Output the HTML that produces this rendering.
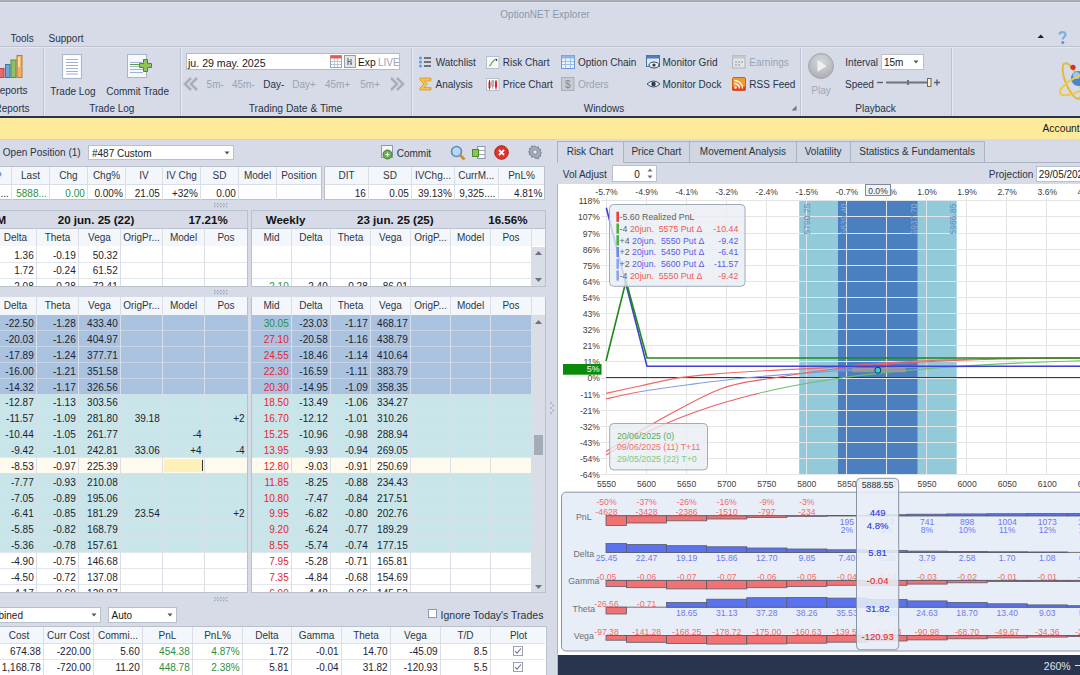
<!DOCTYPE html><html><head><meta charset="utf-8"><style>
html,body{margin:0;padding:0;}
body{width:1080px;height:675px;overflow:hidden;position:relative;background:#d6dbe7;font-family:"Liberation Sans",sans-serif;}
.a{position:absolute;}
.t{position:absolute;white-space:nowrap;}
svg{overflow:visible}
</style></head><body>
<div class="a" style="left:0px;top:0px;width:1080px;height:1px;background:#a9afb3"></div>
<div class="a" style="left:0px;top:1px;width:1080px;height:1px;background:#a3a7b1"></div>
<div class="a" style="left:0px;top:2px;width:1080px;height:1px;background:#dbe1ec"></div>
<div class="t" style="left:395.0px;top:8.54px;font-size:10px;line-height:12px;width:300px;text-align:center;color:#8a98ac;">OptionNET Explorer</div>
<div class="t" style="left:10.5px;top:32.84px;font-size:10px;line-height:12px;color:#283446;">Tools</div>
<div class="t" style="left:48.5px;top:32.84px;font-size:10px;line-height:12px;color:#283446;">Support</div>
<svg class="a" style="left:1037px;top:34px" width="8" height="5"><path d="M0.5 4 L3.8 0.5 L7 4Z" fill="#1a2030"/></svg>
<svg class="a" style="left:1057px;top:30px" width="11" height="15"><path d="M2.5 4.5 C2.5 1.5 8.5 1 8.5 4.5 C8.5 6.5 5.8 7 5.8 9.5" stroke="#78b0e4" stroke-width="2.2" fill="none"/><circle cx="5.8" cy="12.5" r="1.5" fill="#5a94d4"/></svg>
<div class="a" style="left:0px;top:46px;width:1080px;height:1px;background:#bcc3cf"></div>
<div class="a" style="left:0px;top:47px;width:1080px;height:1px;background:#e4e8f0"></div>
<div class="a" style="left:43px;top:48px;width:1px;height:68px;background:#bcc3cf"></div>
<div class="a" style="left:44px;top:48px;width:1px;height:68px;background:#e6eaf1"></div>
<div class="a" style="left:180px;top:48px;width:1px;height:68px;background:#bcc3cf"></div>
<div class="a" style="left:181px;top:48px;width:1px;height:68px;background:#e6eaf1"></div>
<div class="a" style="left:411px;top:48px;width:1px;height:68px;background:#bcc3cf"></div>
<div class="a" style="left:412px;top:48px;width:1px;height:68px;background:#e6eaf1"></div>
<div class="a" style="left:800px;top:48px;width:1px;height:68px;background:#bcc3cf"></div>
<div class="a" style="left:801px;top:48px;width:1px;height:68px;background:#e6eaf1"></div>
<div class="a" style="left:951px;top:48px;width:1px;height:68px;background:#bcc3cf"></div>
<div class="a" style="left:952px;top:48px;width:1px;height:68px;background:#e6eaf1"></div>
<div class="a" style="left:0px;top:116px;width:1080px;height:2px;background:#28344d"></div>
<div class="a" style="left:0px;top:118px;width:1080px;height:21px;background:#fdeb9b"></div>
<div class="t" style="left:1042.5px;top:122.97px;font-size:10.3px;line-height:12px;color:#1a1a1a;">Account:</div>
<div class="a" style="left:0px;top:139px;width:1080px;height:1px;background:#c9cfdb"></div>
<svg class="a" style="left:0;top:54px" width="24" height="25">
<rect x="-1.5" y="14.5" width="5.5" height="9" fill="#e86a6a" stroke="#b94444"/>
<rect x="5.5" y="10.5" width="4.5" height="13" fill="#6aa6e0" stroke="#3f74b0"/>
<rect x="11" y="6" width="5" height="17.5" fill="#8cc266" stroke="#5a8f3a"/>
<rect x="17" y="1.5" width="5" height="22" fill="#f0b060" stroke="#c07830"/>
<rect x="18" y="3" width="2" height="10" fill="#fff3c0" opacity=".7"/>
</svg>
<div class="t" style="left:-7.5px;top:85.23px;font-size:10px;line-height:12px;color:#283446;">Reports</div>
<div class="t" style="left:-5.5px;top:103.23px;font-size:10px;line-height:12px;color:#283446;">Reports</div>
<svg class="a" style="left:61px;top:53px" width="23" height="27">
<rect x="1.5" y="1.5" width="19" height="24" fill="#f6f8fb" stroke="#a9b6c8"/>
<rect x="3" y="3" width="16" height="21" fill="#fff"/>
<g stroke="#9fb3d2" stroke-width="1">
<line x1="5" y1="6.5" x2="17" y2="6.5"/><line x1="5" y1="9.5" x2="17" y2="9.5"/><line x1="5" y1="12.5" x2="17" y2="12.5"/><line x1="5" y1="15.5" x2="17" y2="15.5"/><line x1="5" y1="18.5" x2="17" y2="18.5"/><line x1="5" y1="21" x2="17" y2="21"/></g>
</svg>
<svg class="a" style="left:126px;top:53px" width="28" height="26">
<rect x="1.5" y="1.5" width="19" height="23" fill="#f6f8fb" stroke="#a9b6c8"/>
<g stroke="#9fb3d2" stroke-width="1">
<line x1="4" y1="9.5" x2="16" y2="9.5"/><line x1="4" y1="13.5" x2="17" y2="13.5"/><line x1="4" y1="16.5" x2="17" y2="16.5"/><line x1="4" y1="19.5" x2="17" y2="19.5"/></g>
<line x1="4" y1="11.5" x2="14" y2="11.5" stroke="#5a9a40"/>
<path d="M17.5 6.5h4v4h4v4h-4v4h-4v-4h-4v-4h4z" fill="#8cc456" stroke="#4d8a2a"/>
</svg>
<div class="t" style="left:50.3px;top:85.53px;font-size:10px;line-height:12px;color:#283446;">Trade Log</div>
<div class="t" style="left:106.2px;top:85.53px;font-size:10px;line-height:12px;color:#283446;">Commit Trade</div>
<div class="t" style="left:89.2px;top:103.44px;font-size:10px;line-height:12px;color:#283446;">Trade Log</div>
<div class="a" style="left:186px;top:53px;width:214px;height:17px;background:#fff;border:1px solid #b3bccb;box-sizing:border-box"></div>
<div class="t" style="left:188px;top:56.81px;font-size:10.6px;line-height:13px;color:#1a1a1a;">ju. 29 may. 2025</div>
<svg class="a" style="left:330px;top:55px" width="26" height="13">
<rect x="0.5" y="0.5" width="11" height="12" fill="#fff" stroke="#9aa"/>
<rect x="0.5" y="0.5" width="11" height="3" fill="#e05a50"/>
<g stroke="#b8c4d8"><line x1="1" y1="6.5" x2="11" y2="6.5"/><line x1="1" y1="9.5" x2="11" y2="9.5"/><line x1="4.5" y1="4" x2="4.5" y2="12"/><line x1="7.5" y1="4" x2="7.5" y2="12"/></g>
<rect x="14.5" y="0.5" width="11" height="12" fill="#e4e6ea" stroke="#9a9ea6"/>
<path d="M18 3v7M18 6.5h2M21 4v5M20 9h2" stroke="#555" fill="none"/>
</svg>
<div class="t" style="left:358px;top:57.27px;font-size:10.3px;line-height:12px;color:#1a1a1a;">Exp</div>
<div class="t" style="left:378px;top:57.23px;font-size:10px;line-height:12px;color:#9aa3b3;">LIVE</div>
<svg class="a" style="left:184px;top:77px" width="16" height="14"><path d="M7 1 L1 7 L7 13 M13 1 L7 7 L13 13" stroke="#a9afb8" stroke-width="2.6" fill="none"/></svg>
<svg class="a" style="left:389px;top:77px" width="16" height="14"><path d="M2 1 L8 7 L2 13 M8 1 L14 7 L8 13" stroke="#a9afb8" stroke-width="2.6" fill="none"/></svg>
<div class="t" style="left:206.6px;top:79.44px;font-size:10px;line-height:12px;color:#9aa3b3;">5m-</div>
<div class="t" style="left:232px;top:79.44px;font-size:10px;line-height:12px;color:#9aa3b3;">45m-</div>
<div class="t" style="left:263.3px;top:79.44px;font-size:10px;line-height:12px;color:#2a3548;">Day-</div>
<div class="t" style="left:292.2px;top:79.44px;font-size:10px;line-height:12px;color:#9aa3b3;">Day+</div>
<div class="t" style="left:325px;top:79.44px;font-size:10px;line-height:12px;color:#9aa3b3;">45m+</div>
<div class="t" style="left:360.3px;top:79.44px;font-size:10px;line-height:12px;color:#9aa3b3;">5m+</div>
<div class="t" style="left:248.7px;top:103.27px;font-size:10.25px;line-height:12px;color:#283446;">Trading Date &amp; Time</div>
<div class="t" style="left:435.7px;top:56.73px;font-size:10px;line-height:12px;color:#283446;">Watchlist</div>
<div class="t" style="left:435.5px;top:78.73px;font-size:10px;line-height:12px;color:#283446;">Analysis</div>
<div class="t" style="left:502.8px;top:56.73px;font-size:10px;line-height:12px;color:#283446;">Risk Chart</div>
<div class="t" style="left:502.8px;top:78.73px;font-size:10px;line-height:12px;color:#283446;">Price Chart</div>
<div class="t" style="left:578px;top:56.73px;font-size:10px;line-height:12px;color:#283446;">Option Chain</div>
<div class="t" style="left:578px;top:78.73px;font-size:10px;line-height:12px;color:#9aa3b3;">Orders</div>
<div class="t" style="left:662.5px;top:56.73px;font-size:10px;line-height:12px;color:#283446;">Monitor Grid</div>
<div class="t" style="left:662.5px;top:78.73px;font-size:10px;line-height:12px;color:#283446;">Monitor Dock</div>
<div class="t" style="left:749.3px;top:56.73px;font-size:10px;line-height:12px;color:#9aa3b3;">Earnings</div>
<div class="t" style="left:749.3px;top:78.73px;font-size:10px;line-height:12px;color:#283446;">RSS Feed</div>
<div class="t" style="left:583.7px;top:102.73px;font-size:10px;line-height:12px;color:#283446;">Windows</div>
<svg class="a" style="left:791px;top:105px" width="6" height="6"><path d="M5.5 0.5V5.5H0.5Z" fill="#6a7488"/></svg>
<svg class="a" style="left:418px;top:55px" width="15" height="14">
<g fill="#5b9be0"><circle cx="2.5" cy="3" r="1.5"/><circle cx="2.5" cy="7" r="1.5"/><circle cx="2.5" cy="11" r="1.5"/></g>
<g stroke="#333c4a" stroke-width="1.3"><line x1="6" y1="3" x2="13" y2="3"/><line x1="6" y1="7" x2="13" y2="7"/><line x1="6" y1="11" x2="13" y2="11"/></g></svg>
<svg class="a" style="left:419px;top:77px" width="13" height="14">
<path d="M1 1H12V4H5.5L8.5 7L5 10.5H12V13H1V11L5 7L1 3Z" fill="#f2c24a" stroke="#d99a2a" stroke-width=".8"/></svg>
<svg class="a" style="left:486px;top:56px" width="14" height="14">
<rect x="0.5" y="0.5" width="12.5" height="12" fill="#f8f9fb" stroke="#b6bfcc"/>
<path d="M3 10 C5 10 5 7 6.5 6 C8 5 8 3 10.5 3" stroke="#5aa64a" stroke-width="1.1" fill="none"/><circle cx="10.5" cy="4" r=".9" fill="#334"/></svg>
<svg class="a" style="left:486px;top:78px" width="14" height="14">
<rect x="0.5" y="0.5" width="12.5" height="12" fill="#f8f9fb" stroke="#b6bfcc"/>
<rect x="2.5" y="4" width="2" height="6" fill="#e03030"/><line x1="3.5" y1="2" x2="3.5" y2="11.5" stroke="#c02020"/>
<rect x="5.8" y="3" width="2" height="5" fill="#fff" stroke="#777" stroke-width=".6"/><line x1="6.8" y1="2" x2="6.8" y2="11" stroke="#777" stroke-width=".6"/>
<rect x="9" y="3.5" width="2" height="6" fill="#e03030"/><line x1="10" y1="2" x2="10" y2="11.5" stroke="#c02020"/></svg>
<svg class="a" style="left:561px;top:55px" width="14" height="14">
<rect x="0.5" y="0.5" width="13" height="13" fill="#eaf2fc" stroke="#6b9ad6"/>
<rect x="0.5" y="0.5" width="13" height="3" fill="#8fb6e8"/>
<g stroke="#9cbde6"><line x1="4.5" y1="3" x2="4.5" y2="13"/><line x1="9.5" y1="3" x2="9.5" y2="13"/><line x1="1" y1="6.5" x2="13" y2="6.5"/><line x1="1" y1="9.5" x2="13" y2="9.5"/></g></svg>
<svg class="a" style="left:561px;top:77px" width="14" height="14">
<rect x="0.5" y="0.5" width="12.5" height="13" fill="#c8ccd2" stroke="#a9aeb6"/>
<text x="6.8" y="11" text-anchor="middle" font-family="Liberation Sans" font-size="10" fill="#888">$</text></svg>
<svg class="a" style="left:646px;top:55px" width="15" height="14">
<rect x="0.5" y="0.5" width="13" height="11" fill="#dfe8f4" stroke="#4a6ea0"/>
<rect x="0.5" y="0.5" width="13" height="3" fill="#4a7ec0"/>
<ellipse cx="8" cy="10" rx="5" ry="3" fill="#e8eef6" stroke="#3a4a60"/><circle cx="8" cy="10" r="1.6" fill="#2a3a50"/></svg>
<svg class="a" style="left:646px;top:79px" width="15" height="10">
<path d="M1 5 Q7.5 -1 14 5 Q7.5 11 1 5Z" fill="#e8eef6" stroke="#3a4a60"/><circle cx="7.5" cy="5" r="2.2" fill="#2a3a50"/></svg>
<svg class="a" style="left:732px;top:55px" width="14" height="14">
<rect x="0.5" y="0.5" width="12.5" height="12.5" fill="#e2e4e8" stroke="#b0b4ba"/>
<rect x="0.5" y="0.5" width="12.5" height="3" fill="#c4c8ce"/>
<g fill="#b8bcc2"><rect x="3" y="6" width="2" height="2"/><rect x="6" y="6" width="2" height="2"/><rect x="9" y="6" width="2" height="2"/><rect x="3" y="9" width="2" height="2"/><rect x="6" y="9" width="2" height="2"/></g></svg>
<svg class="a" style="left:732px;top:77px" width="14" height="14">
<rect x="0.5" y="0.5" width="13" height="13" rx="1.5" fill="#f39a2c" stroke="#d0601a"/>
<rect x="0.5" y="9.5" width="13" height="4" fill="#e0402a"/>
<circle cx="3.5" cy="10.5" r="1.3" fill="#fff"/><path d="M2.5 6.5 A5 5 0 0 1 7.5 11.5 M2.5 3.5 A8 8 0 0 1 10.5 11.5" stroke="#fff" stroke-width="1.4" fill="none"/></svg>
<svg class="a" style="left:807px;top:52px" width="28" height="28">
<defs><radialGradient id="pg" cx="50%" cy="35%" r="60%"><stop offset="0" stop-color="#d8dadd"/><stop offset="1" stop-color="#aeb2b8"/></radialGradient></defs>
<circle cx="14" cy="14" r="12.5" fill="url(#pg)" stroke="#a2a6ac"/>
<path d="M10.5 8 L19.5 14 L10.5 20Z" fill="#eef0f2"/></svg>
<div class="t" style="left:671.0px;top:85.23px;font-size:10px;line-height:12px;width:300px;text-align:center;color:#a0a8b4;">Play</div>
<div class="t" style="left:845.3px;top:57.44px;font-size:10px;line-height:12px;color:#283446;">Interval</div>
<div class="a" style="left:881px;top:54px;width:43px;height:16px;background:#fff;border:1px solid #b8c0cc;box-sizing:border-box"></div>
<div class="t" style="left:884px;top:57.44px;font-size:10px;line-height:12px;color:#1a1a1a;">15m</div>
<svg class="a" style="left:913px;top:60px" width="6" height="4"><path d="M0.5 0.5H5.5L3 3.5Z" fill="#555"/></svg>
<div class="t" style="left:845px;top:78.83px;font-size:10px;line-height:12px;color:#283446;">Speed</div>
<svg class="a" style="left:875px;top:78px" width="68" height="10">
<line x1="2" y1="4.5" x2="8" y2="4.5" stroke="#5a6070" stroke-width="1.4"/>
<line x1="11" y1="4.5" x2="53" y2="4.5" stroke="#6d7380" stroke-width="2"/>
<rect x="32" y="2" width="2" height="5" fill="#6d7380"/>
<rect x="52.5" y="0.5" width="3.5" height="8" fill="#fff3c8" stroke="#6d6a60"/>
<path d="M59 4.5H65M62 1.5V7.5" stroke="#5a6070" stroke-width="1.4"/></svg>
<div class="t" style="left:855.3px;top:102.73px;font-size:10px;line-height:12px;color:#283446;">Playback</div>
<svg class="a" style="left:1040px;top:50px" width="40" height="60">
<ellipse cx="20" cy="93" rx="6" ry="2" fill="#b8bcc8" opacity=".6"/>
<ellipse cx="32" cy="31" rx="6.5" ry="19" fill="none" stroke="#e8b830" stroke-width="2" transform="rotate(-22 32 31)"/>
<circle cx="38.5" cy="28.5" r="7.5" fill="#4a86c8"/><circle cx="36.5" cy="25.5" r="3.5" fill="#9cc8f0"/>
<ellipse cx="38" cy="34" rx="20" ry="7" fill="none" stroke="#f0c848" stroke-width="2" transform="rotate(-28 38 34)"/>
<circle cx="33" cy="17.3" r="2.6" fill="#d83020"/></svg>
<div class="t" style="left:2.8px;top:147.34px;font-size:10px;line-height:12px;color:#283446;">Open Position (1)</div>
<div class="a" style="left:88px;top:145px;width:146px;height:15px;background:#fff;border:1px solid #b8c0cc;box-sizing:border-box"></div>
<div class="t" style="left:92px;top:147.64px;font-size:10px;line-height:12px;color:#1a1a1a;">#487 Custom</div>
<svg class="a" style="left:224px;top:151px" width="6" height="4"><path d="M0.5 0.5H5.5L3 3.5Z" fill="#555"/></svg>
<svg class="a" style="left:380px;top:145px" width="15" height="15">
<rect x="1.5" y="0.5" width="11" height="12" fill="#f4f6fa" stroke="#8a9ab0"/>
<circle cx="7.5" cy="9.5" r="4.5" fill="#6ab04c" stroke="#3f7f2a"/><path d="M5.5 9.5h4M7.5 7.5v4" stroke="#fff" stroke-width="1.2"/></svg>
<div class="t" style="left:396.7px;top:147.94px;font-size:10px;line-height:12px;color:#283446;">Commit</div>
<svg class="a" style="left:450px;top:145px" width="16" height="16">
<circle cx="6.5" cy="6.5" r="5" fill="#b8d8f4" stroke="#5a8cc0" stroke-width="1.6"/><path d="M10 10L14.5 14.5" stroke="#c8902a" stroke-width="2.6"/></svg>
<svg class="a" style="left:472px;top:146px" width="14" height="14">
<rect x="5.5" y="0.5" width="7.5" height="12" fill="#fff" stroke="#8a96a6"/><path d="M6 4.5h7M6 8.5h7" stroke="#9aa6b6"/>
<rect x="0.5" y="3.5" width="6" height="7" fill="#8cc456" stroke="#4d8a2a"/></svg>
<svg class="a" style="left:494px;top:145px" width="15" height="15">
<circle cx="7.5" cy="7.5" r="6.8" fill="#e0342c" stroke="#b0201a"/><path d="M5 5L10 10M10 5L5 10" stroke="#fff" stroke-width="1.8"/></svg>
<svg class="a" style="left:528px;top:145px" width="14" height="14">
<path d="M7 0.8l1.3 1.6 2-.6.4 2 2 .7-.6 2 1.5 1.4-1.5 1.3.6 2-2 .7-.4 2-2-.6L7 13.2 5.7 11.6l-2 .6-.4-2-2-.7.6-2L.4 6.9 1.9 5.6l-.6-2 2-.7.4-2 2 .6z" fill="#a4acba" stroke="#727c8c" stroke-width=".9"/><circle cx="7" cy="7" r="2.2" fill="#e8ecf2" stroke="#727c8c" stroke-width=".8"/></svg>
<div class="a" style="left:-1px;top:166px;width:322.5px;height:33.5px;background:#fff;border:1px solid #b9c1cc;box-sizing:border-box"></div>
<div class="a" style="left:0px;top:167px;width:321px;height:17px;background:#f3f6fa"></div>
<div class="a" style="left:0px;top:184px;width:321px;height:1px;background:#dadee6"></div>
<div class="a" style="left:11px;top:167px;width:1px;height:32.5px;background:#dadee6"></div>
<div class="a" style="left:49px;top:167px;width:1px;height:32.5px;background:#dadee6"></div>
<div class="a" style="left:87px;top:167px;width:1px;height:32.5px;background:#dadee6"></div>
<div class="a" style="left:125px;top:167px;width:1px;height:32.5px;background:#dadee6"></div>
<div class="a" style="left:162px;top:167px;width:1px;height:32.5px;background:#dadee6"></div>
<div class="a" style="left:200px;top:167px;width:1px;height:32.5px;background:#dadee6"></div>
<div class="a" style="left:238px;top:167px;width:1px;height:32.5px;background:#dadee6"></div>
<div class="a" style="left:276px;top:167px;width:1px;height:32.5px;background:#dadee6"></div>
<div class="t" style="left:-119.5px;top:170.44px;font-size:10px;line-height:12px;width:300px;text-align:center;color:#2c3646;">Last</div>
<div class="t" style="left:-81.5px;top:170.44px;font-size:10px;line-height:12px;width:300px;text-align:center;color:#2c3646;">Chg</div>
<div class="t" style="left:-43.5px;top:170.44px;font-size:10px;line-height:12px;width:300px;text-align:center;color:#2c3646;">Chg%</div>
<div class="t" style="left:-6.0px;top:170.44px;font-size:10px;line-height:12px;width:300px;text-align:center;color:#2c3646;">IV</div>
<div class="t" style="left:31.5px;top:170.44px;font-size:10px;line-height:12px;width:300px;text-align:center;color:#2c3646;">IV Chg</div>
<div class="t" style="left:69.5px;top:170.44px;font-size:10px;line-height:12px;width:300px;text-align:center;color:#2c3646;">SD</div>
<div class="t" style="left:107.5px;top:170.44px;font-size:10px;line-height:12px;width:300px;text-align:center;color:#2c3646;">Model</div>
<div class="t" style="left:149.0px;top:170.44px;font-size:10px;line-height:12px;width:300px;text-align:center;color:#2c3646;">Position</div>
<div class="t" style="left:-4px;top:170.74px;font-size:10px;line-height:12px;"><span style="color:#3a7ad0">?</span></div>
<div class="t" style="left:-191.2px;top:187.84px;font-size:10px;line-height:12px;width:200px;text-align:right;color:#1e2230;">...</div>
<div class="t" style="left:-153.2px;top:187.84px;font-size:10px;line-height:12px;width:200px;text-align:right;color:#2a9040;">5888...</div>
<div class="t" style="left:-115.2px;top:187.84px;font-size:10px;line-height:12px;width:200px;text-align:right;color:#2a9040;">0.00</div>
<div class="t" style="left:-77.2px;top:187.84px;font-size:10px;line-height:12px;width:200px;text-align:right;color:#1e2230;">0.00%</div>
<div class="t" style="left:-40.19999999999999px;top:187.84px;font-size:10px;line-height:12px;width:200px;text-align:right;color:#1e2230;">21.05</div>
<div class="t" style="left:-2.1999999999999886px;top:187.84px;font-size:10px;line-height:12px;width:200px;text-align:right;color:#1e2230;">+32%</div>
<div class="t" style="left:35.80000000000001px;top:187.84px;font-size:10px;line-height:12px;width:200px;text-align:right;color:#1e2230;">0.00</div>
<div class="a" style="left:324px;top:166px;width:221px;height:33.5px;background:#fff;border:1px solid #b9c1cc;box-sizing:border-box"></div>
<div class="a" style="left:325px;top:167px;width:219px;height:17px;background:#f3f6fa"></div>
<div class="a" style="left:325px;top:184px;width:219px;height:1px;background:#dadee6"></div>
<div class="a" style="left:368px;top:167px;width:1px;height:32.5px;background:#dadee6"></div>
<div class="a" style="left:411px;top:167px;width:1px;height:32.5px;background:#dadee6"></div>
<div class="a" style="left:454px;top:167px;width:1px;height:32.5px;background:#dadee6"></div>
<div class="a" style="left:497.5px;top:167px;width:1px;height:32.5px;background:#dadee6"></div>
<div class="t" style="left:196.5px;top:170.44px;font-size:10px;line-height:12px;width:300px;text-align:center;color:#2c3646;">DIT</div>
<div class="t" style="left:240.0px;top:170.44px;font-size:10px;line-height:12px;width:300px;text-align:center;color:#2c3646;">SD</div>
<div class="t" style="left:283.0px;top:170.44px;font-size:10px;line-height:12px;width:300px;text-align:center;color:#2c3646;">IVChg...</div>
<div class="t" style="left:326.25px;top:170.44px;font-size:10px;line-height:12px;width:300px;text-align:center;color:#2c3646;">CurrM...</div>
<div class="t" style="left:371.5px;top:170.44px;font-size:10px;line-height:12px;width:300px;text-align:center;color:#2c3646;">PnL%</div>
<div class="t" style="left:165.8px;top:187.84px;font-size:10px;line-height:12px;width:200px;text-align:right;color:#1e2230;">16</div>
<div class="t" style="left:208.8px;top:187.84px;font-size:10px;line-height:12px;width:200px;text-align:right;color:#1e2230;">0.05</div>
<div class="t" style="left:251.8px;top:187.84px;font-size:10px;line-height:12px;width:200px;text-align:right;color:#1e2230;">39.13%</div>
<div class="t" style="left:295.3px;top:187.84px;font-size:10px;line-height:12px;width:200px;text-align:right;color:#1e2230;">9,325....</div>
<div class="t" style="left:342.29999999999995px;top:187.84px;font-size:10px;line-height:12px;width:200px;text-align:right;color:#1e2230;">4.81%</div>
<svg class="a" style="left:214px;top:203.2px" width="14" height="5"><g fill="#8a98ae" opacity=".8"><rect x="0" y="0" width="1.3" height="1.3"/><rect x="0" y="3" width="1.3" height="1.3"/><rect x="3" y="0" width="1.3" height="1.3"/><rect x="3" y="3" width="1.3" height="1.3"/><rect x="6" y="0" width="1.3" height="1.3"/><rect x="6" y="3" width="1.3" height="1.3"/><rect x="9" y="0" width="1.3" height="1.3"/><rect x="9" y="3" width="1.3" height="1.3"/><rect x="12" y="0" width="1.3" height="1.3"/><rect x="12" y="3" width="1.3" height="1.3"/><rect x="1.5" y="1.5" width="1.1" height="1.1"/><rect x="4.5" y="1.5" width="1.1" height="1.1"/><rect x="7.5" y="1.5" width="1.1" height="1.1"/><rect x="10.5" y="1.5" width="1.1" height="1.1"/></g></svg>
<div class="a" style="left:-2px;top:210px;width:250px;height:76.5px;background:#fff;border:1px solid #b9c1cc;box-sizing:border-box"></div>
<div class="a" style="left:-1px;top:211px;width:248px;height:17.5px;background:#d6dbe7"></div>
<div class="a" style="left:-1px;top:227.5px;width:248px;height:1px;background:#bcc3cf"></div>
<div class="a" style="left:-1px;top:228.5px;width:248px;height:17.80000000000001px;background:#f3f6fa"></div>
<div class="a" style="left:-1px;top:262px;width:248px;height:1px;background:#e3e6ec"></div>
<div class="a" style="left:-1px;top:278px;width:248px;height:1px;background:#e3e6ec"></div>
<div class="a" style="left:36px;top:228.5px;width:1px;height:57.0px;background:#dadee6"></div>
<div class="a" style="left:78px;top:228.5px;width:1px;height:57.0px;background:#dadee6"></div>
<div class="a" style="left:120px;top:228.5px;width:1px;height:57.0px;background:#dadee6"></div>
<div class="a" style="left:162px;top:228.5px;width:1px;height:57.0px;background:#dadee6"></div>
<div class="a" style="left:204px;top:228.5px;width:1px;height:57.0px;background:#dadee6"></div>
<div class="t" style="left:-134.5px;top:231.94px;font-size:10px;line-height:12px;width:300px;text-align:center;color:#2c3646;">Delta</div>
<div class="t" style="left:-92.5px;top:231.94px;font-size:10px;line-height:12px;width:300px;text-align:center;color:#2c3646;">Theta</div>
<div class="t" style="left:-50.5px;top:231.94px;font-size:10px;line-height:12px;width:300px;text-align:center;color:#2c3646;">Vega</div>
<div class="t" style="left:-8.5px;top:231.94px;font-size:10px;line-height:12px;width:300px;text-align:center;color:#2c3646;">OrigPr...</div>
<div class="t" style="left:33.5px;top:231.94px;font-size:10px;line-height:12px;width:300px;text-align:center;color:#2c3646;">Model</div>
<div class="t" style="left:76.0px;top:231.94px;font-size:10px;line-height:12px;width:300px;text-align:center;color:#2c3646;">Pos</div>
<div class="a" style="left:0px;top:246px;width:247px;height:39.5px;overflow:hidden">
<div class="t" style="left:-166.3px;top:3.57px;font-size:10px;line-height:12px;width:200px;text-align:right;color:#1e2230;">1.36</div>
<div class="t" style="left:-124.3px;top:3.57px;font-size:10px;line-height:12px;width:200px;text-align:right;color:#1e2230;">-0.19</div>
<div class="t" style="left:-82.3px;top:3.57px;font-size:10px;line-height:12px;width:200px;text-align:right;color:#1e2230;">50.32</div>
<div class="t" style="left:-166.3px;top:19.43px;font-size:10px;line-height:12px;width:200px;text-align:right;color:#1e2230;">1.72</div>
<div class="t" style="left:-124.3px;top:19.43px;font-size:10px;line-height:12px;width:200px;text-align:right;color:#1e2230;">-0.24</div>
<div class="t" style="left:-82.3px;top:19.43px;font-size:10px;line-height:12px;width:200px;text-align:right;color:#1e2230;">61.52</div>
<div class="t" style="left:-166.3px;top:35.29px;font-size:10px;line-height:12px;width:200px;text-align:right;color:#1e2230;">2.08</div>
<div class="t" style="left:-124.3px;top:35.29px;font-size:10px;line-height:12px;width:200px;text-align:right;color:#1e2230;">-0.28</div>
<div class="t" style="left:-82.3px;top:35.29px;font-size:10px;line-height:12px;width:200px;text-align:right;color:#1e2230;">72.41</div>
</div>
<div class="t" style="left:-3.5px;top:213.03px;font-size:11.6px;line-height:14px;color:#111;font-weight:bold;">M</div>
<div class="t" style="left:57.7px;top:213.03px;font-size:11.6px;line-height:14px;color:#111;font-weight:bold;">20 jun. 25 (22)</div>
<div class="t" style="left:188.4px;top:213.03px;font-size:11.6px;line-height:14px;color:#111;font-weight:bold;">17.21%</div>
<div class="a" style="left:251px;top:210px;width:295px;height:76.5px;background:#fff;border:1px solid #b9c1cc;box-sizing:border-box"></div>
<div class="a" style="left:252px;top:211px;width:293px;height:17.5px;background:#d6dbe7"></div>
<div class="a" style="left:252px;top:227.5px;width:293px;height:1px;background:#bcc3cf"></div>
<div class="a" style="left:252px;top:228.5px;width:293px;height:17.80000000000001px;background:#f3f6fa"></div>
<div class="a" style="left:252px;top:262px;width:279px;height:1px;background:#e3e6ec"></div>
<div class="a" style="left:252px;top:278px;width:279px;height:1px;background:#e3e6ec"></div>
<div class="a" style="left:291px;top:228.5px;width:1px;height:57.0px;background:#dadee6"></div>
<div class="a" style="left:330px;top:228.5px;width:1px;height:57.0px;background:#dadee6"></div>
<div class="a" style="left:370px;top:228.5px;width:1px;height:57.0px;background:#dadee6"></div>
<div class="a" style="left:410px;top:228.5px;width:1px;height:57.0px;background:#dadee6"></div>
<div class="a" style="left:450px;top:228.5px;width:1px;height:57.0px;background:#dadee6"></div>
<div class="a" style="left:490px;top:228.5px;width:1px;height:57.0px;background:#dadee6"></div>
<div class="a" style="left:531px;top:228.5px;width:1px;height:57.0px;background:#dadee6"></div>
<div class="t" style="left:121.5px;top:231.94px;font-size:10px;line-height:12px;width:300px;text-align:center;color:#2c3646;">Mid</div>
<div class="t" style="left:161.0px;top:231.94px;font-size:10px;line-height:12px;width:300px;text-align:center;color:#2c3646;">Delta</div>
<div class="t" style="left:200.5px;top:231.94px;font-size:10px;line-height:12px;width:300px;text-align:center;color:#2c3646;">Theta</div>
<div class="t" style="left:240.5px;top:231.94px;font-size:10px;line-height:12px;width:300px;text-align:center;color:#2c3646;">Vega</div>
<div class="t" style="left:280.5px;top:231.94px;font-size:10px;line-height:12px;width:300px;text-align:center;color:#2c3646;">OrigP...</div>
<div class="t" style="left:320.5px;top:231.94px;font-size:10px;line-height:12px;width:300px;text-align:center;color:#2c3646;">Model</div>
<div class="t" style="left:361.0px;top:231.94px;font-size:10px;line-height:12px;width:300px;text-align:center;color:#2c3646;">Pos</div>
<div class="a" style="left:252px;top:246px;width:279px;height:39.5px;overflow:hidden">
<div class="t" style="left:-163.3px;top:35.29px;font-size:10px;line-height:12px;width:200px;text-align:right;color:#2a9040;">2.10</div>
<div class="t" style="left:-124.30000000000001px;top:35.29px;font-size:10px;line-height:12px;width:200px;text-align:right;color:#1e2230;">-2.40</div>
<div class="t" style="left:-84.30000000000001px;top:35.29px;font-size:10px;line-height:12px;width:200px;text-align:right;color:#1e2230;">-0.28</div>
<div class="t" style="left:-44.30000000000001px;top:35.29px;font-size:10px;line-height:12px;width:200px;text-align:right;color:#1e2230;">86.01</div>
</div>
<div class="t" style="left:265.7px;top:213.03px;font-size:11.6px;line-height:14px;color:#111;font-weight:bold;">Weekly</div>
<div class="t" style="left:357px;top:213.03px;font-size:11.6px;line-height:14px;color:#111;font-weight:bold;">23 jun. 25 (25)</div>
<div class="t" style="left:488.2px;top:213.03px;font-size:11.6px;line-height:14px;color:#111;font-weight:bold;">16.56%</div>
<div class="a" style="left:531px;top:246.5px;width:14px;height:39px;background:#d8dde6"></div>
<svg class="a" style="left:535px;top:251px" width="7" height="4"><path d="M0 4H7L3.5 0Z" fill="#6a7282"/></svg>
<svg class="a" style="left:535px;top:278px" width="7" height="4"><path d="M0 0H7L3.5 4Z" fill="#6a7282"/></svg>
<svg class="a" style="left:214px;top:289.9px" width="14" height="5"><g fill="#8a98ae" opacity=".8"><rect x="0" y="0" width="1.3" height="1.3"/><rect x="0" y="3" width="1.3" height="1.3"/><rect x="3" y="0" width="1.3" height="1.3"/><rect x="3" y="3" width="1.3" height="1.3"/><rect x="6" y="0" width="1.3" height="1.3"/><rect x="6" y="3" width="1.3" height="1.3"/><rect x="9" y="0" width="1.3" height="1.3"/><rect x="9" y="3" width="1.3" height="1.3"/><rect x="12" y="0" width="1.3" height="1.3"/><rect x="12" y="3" width="1.3" height="1.3"/><rect x="1.5" y="1.5" width="1.1" height="1.1"/><rect x="4.5" y="1.5" width="1.1" height="1.1"/><rect x="7.5" y="1.5" width="1.1" height="1.1"/><rect x="10.5" y="1.5" width="1.1" height="1.1"/></g></svg>
<div class="a" style="left:-2px;top:297px;width:250px;height:296px;background:#fff;border:1px solid #b9c1cc;box-sizing:border-box"></div>
<div class="a" style="left:-1px;top:297px;width:248px;height:17.80000000000001px;background:#f3f6fa"></div>
<div class="a" style="left:-1px;top:314.8px;width:248px;height:15.86px;background:#a9c2e0"></div>
<div class="a" style="left:-1px;top:330.66px;width:248px;height:15.86px;background:#a9c2e0"></div>
<div class="a" style="left:-1px;top:346.52px;width:248px;height:15.86px;background:#a9c2e0"></div>
<div class="a" style="left:-1px;top:362.38px;width:248px;height:15.86px;background:#a9c2e0"></div>
<div class="a" style="left:-1px;top:378.24px;width:248px;height:15.86px;background:#a9c2e0"></div>
<div class="a" style="left:-1px;top:394.1px;width:248px;height:15.86px;background:#c8e5ea"></div>
<div class="a" style="left:-1px;top:409.96000000000004px;width:248px;height:15.86px;background:#c8e5ea"></div>
<div class="a" style="left:-1px;top:425.82px;width:248px;height:15.86px;background:#c8e5ea"></div>
<div class="a" style="left:-1px;top:441.68px;width:248px;height:15.86px;background:#c8e5ea"></div>
<div class="a" style="left:-1px;top:457.54px;width:248px;height:15.86px;background:#fffaee"></div>
<div class="a" style="left:-1px;top:473.4px;width:248px;height:15.86px;background:#c8e5ea"></div>
<div class="a" style="left:-1px;top:489.26px;width:248px;height:15.86px;background:#c8e5ea"></div>
<div class="a" style="left:-1px;top:505.12px;width:248px;height:15.86px;background:#c8e5ea"></div>
<div class="a" style="left:-1px;top:520.98px;width:248px;height:15.86px;background:#c8e5ea"></div>
<div class="a" style="left:-1px;top:536.84px;width:248px;height:15.86px;background:#c8e5ea"></div>
<div class="a" style="left:-1px;top:330px;width:248px;height:1px;background:#c8d4e6"></div>
<div class="a" style="left:-1px;top:346px;width:248px;height:1px;background:#c8d4e6"></div>
<div class="a" style="left:-1px;top:362px;width:248px;height:1px;background:#c8d4e6"></div>
<div class="a" style="left:-1px;top:378px;width:248px;height:1px;background:#c8d4e6"></div>
<div class="a" style="left:-1px;top:394px;width:248px;height:1px;background:#d4e2e8"></div>
<div class="a" style="left:-1px;top:409px;width:248px;height:1px;background:#d4e2e8"></div>
<div class="a" style="left:-1px;top:425px;width:248px;height:1px;background:#d4e2e8"></div>
<div class="a" style="left:-1px;top:441px;width:248px;height:1px;background:#d4e2e8"></div>
<div class="a" style="left:-1px;top:457px;width:248px;height:1px;background:#e3e6ec"></div>
<div class="a" style="left:-1px;top:473px;width:248px;height:1px;background:#d4e2e8"></div>
<div class="a" style="left:-1px;top:489px;width:248px;height:1px;background:#d4e2e8"></div>
<div class="a" style="left:-1px;top:505px;width:248px;height:1px;background:#d4e2e8"></div>
<div class="a" style="left:-1px;top:520px;width:248px;height:1px;background:#d4e2e8"></div>
<div class="a" style="left:-1px;top:536px;width:248px;height:1px;background:#d4e2e8"></div>
<div class="a" style="left:-1px;top:552px;width:248px;height:1px;background:#e3e6ec"></div>
<div class="a" style="left:-1px;top:568px;width:248px;height:1px;background:#e3e6ec"></div>
<div class="a" style="left:-1px;top:584px;width:248px;height:1px;background:#e3e6ec"></div>
<div class="a" style="left:36px;top:297px;width:1px;height:295px;background:#dadee6"></div>
<div class="a" style="left:78px;top:297px;width:1px;height:295px;background:#dadee6"></div>
<div class="a" style="left:120px;top:297px;width:1px;height:295px;background:#dadee6"></div>
<div class="a" style="left:162px;top:297px;width:1px;height:295px;background:#dadee6"></div>
<div class="a" style="left:204px;top:297px;width:1px;height:295px;background:#dadee6"></div>
<div class="t" style="left:-134.5px;top:300.44px;font-size:10px;line-height:12px;width:300px;text-align:center;color:#2c3646;">Delta</div>
<div class="t" style="left:-92.5px;top:300.44px;font-size:10px;line-height:12px;width:300px;text-align:center;color:#2c3646;">Theta</div>
<div class="t" style="left:-50.5px;top:300.44px;font-size:10px;line-height:12px;width:300px;text-align:center;color:#2c3646;">Vega</div>
<div class="t" style="left:-8.5px;top:300.44px;font-size:10px;line-height:12px;width:300px;text-align:center;color:#2c3646;">OrigPr...</div>
<div class="t" style="left:33.5px;top:300.44px;font-size:10px;line-height:12px;width:300px;text-align:center;color:#2c3646;">Model</div>
<div class="t" style="left:76.0px;top:300.44px;font-size:10px;line-height:12px;width:300px;text-align:center;color:#2c3646;">Pos</div>
<div class="a" style="left:0px;top:315px;width:247px;height:277px;overflow:hidden">
<div class="t" style="left:-166.3px;top:3.07px;font-size:10px;line-height:12px;width:200px;text-align:right;color:#1e2230;">-22.50</div>
<div class="t" style="left:-124.3px;top:3.07px;font-size:10px;line-height:12px;width:200px;text-align:right;color:#1e2230;">-1.28</div>
<div class="t" style="left:-82.3px;top:3.07px;font-size:10px;line-height:12px;width:200px;text-align:right;color:#1e2230;">433.40</div>
<div class="t" style="left:-166.3px;top:18.93px;font-size:10px;line-height:12px;width:200px;text-align:right;color:#1e2230;">-20.03</div>
<div class="t" style="left:-124.3px;top:18.93px;font-size:10px;line-height:12px;width:200px;text-align:right;color:#1e2230;">-1.26</div>
<div class="t" style="left:-82.3px;top:18.93px;font-size:10px;line-height:12px;width:200px;text-align:right;color:#1e2230;">404.97</div>
<div class="t" style="left:-166.3px;top:34.79px;font-size:10px;line-height:12px;width:200px;text-align:right;color:#1e2230;">-17.89</div>
<div class="t" style="left:-124.3px;top:34.79px;font-size:10px;line-height:12px;width:200px;text-align:right;color:#1e2230;">-1.24</div>
<div class="t" style="left:-82.3px;top:34.79px;font-size:10px;line-height:12px;width:200px;text-align:right;color:#1e2230;">377.71</div>
<div class="t" style="left:-166.3px;top:50.65px;font-size:10px;line-height:12px;width:200px;text-align:right;color:#1e2230;">-16.00</div>
<div class="t" style="left:-124.3px;top:50.65px;font-size:10px;line-height:12px;width:200px;text-align:right;color:#1e2230;">-1.21</div>
<div class="t" style="left:-82.3px;top:50.65px;font-size:10px;line-height:12px;width:200px;text-align:right;color:#1e2230;">351.58</div>
<div class="t" style="left:-166.3px;top:66.51px;font-size:10px;line-height:12px;width:200px;text-align:right;color:#1e2230;">-14.32</div>
<div class="t" style="left:-124.3px;top:66.51px;font-size:10px;line-height:12px;width:200px;text-align:right;color:#1e2230;">-1.17</div>
<div class="t" style="left:-82.3px;top:66.51px;font-size:10px;line-height:12px;width:200px;text-align:right;color:#1e2230;">326.56</div>
<div class="t" style="left:-166.3px;top:82.37px;font-size:10px;line-height:12px;width:200px;text-align:right;color:#1e2230;">-12.87</div>
<div class="t" style="left:-124.3px;top:82.37px;font-size:10px;line-height:12px;width:200px;text-align:right;color:#1e2230;">-1.13</div>
<div class="t" style="left:-82.3px;top:82.37px;font-size:10px;line-height:12px;width:200px;text-align:right;color:#1e2230;">303.56</div>
<div class="t" style="left:-166.3px;top:98.23px;font-size:10px;line-height:12px;width:200px;text-align:right;color:#1e2230;">-11.57</div>
<div class="t" style="left:-124.3px;top:98.23px;font-size:10px;line-height:12px;width:200px;text-align:right;color:#1e2230;">-1.09</div>
<div class="t" style="left:-82.3px;top:98.23px;font-size:10px;line-height:12px;width:200px;text-align:right;color:#1e2230;">281.80</div>
<div class="t" style="left:-40.30000000000001px;top:98.23px;font-size:10px;line-height:12px;width:200px;text-align:right;color:#1e2230;">39.18</div>
<div class="t" style="left:44.69999999999999px;top:98.23px;font-size:10px;line-height:12px;width:200px;text-align:right;color:#1e2230;">+2</div>
<div class="t" style="left:-166.3px;top:114.09px;font-size:10px;line-height:12px;width:200px;text-align:right;color:#1e2230;">-10.44</div>
<div class="t" style="left:-124.3px;top:114.09px;font-size:10px;line-height:12px;width:200px;text-align:right;color:#1e2230;">-1.05</div>
<div class="t" style="left:-82.3px;top:114.09px;font-size:10px;line-height:12px;width:200px;text-align:right;color:#1e2230;">261.77</div>
<div class="t" style="left:1.6999999999999886px;top:114.09px;font-size:10px;line-height:12px;width:200px;text-align:right;color:#1e2230;">-4</div>
<div class="t" style="left:-166.3px;top:129.95px;font-size:10px;line-height:12px;width:200px;text-align:right;color:#1e2230;">-9.42</div>
<div class="t" style="left:-124.3px;top:129.95px;font-size:10px;line-height:12px;width:200px;text-align:right;color:#1e2230;">-1.01</div>
<div class="t" style="left:-82.3px;top:129.95px;font-size:10px;line-height:12px;width:200px;text-align:right;color:#1e2230;">242.81</div>
<div class="t" style="left:-40.30000000000001px;top:129.95px;font-size:10px;line-height:12px;width:200px;text-align:right;color:#1e2230;">33.06</div>
<div class="t" style="left:1.6999999999999886px;top:129.95px;font-size:10px;line-height:12px;width:200px;text-align:right;color:#1e2230;">+4</div>
<div class="t" style="left:44.69999999999999px;top:129.95px;font-size:10px;line-height:12px;width:200px;text-align:right;color:#1e2230;">-4</div>
<div class="t" style="left:-166.3px;top:145.81px;font-size:10px;line-height:12px;width:200px;text-align:right;color:#1e2230;">-8.53</div>
<div class="t" style="left:-124.3px;top:145.81px;font-size:10px;line-height:12px;width:200px;text-align:right;color:#1e2230;">-0.97</div>
<div class="t" style="left:-82.3px;top:145.81px;font-size:10px;line-height:12px;width:200px;text-align:right;color:#1e2230;">225.39</div>
<div class="t" style="left:-166.3px;top:161.67px;font-size:10px;line-height:12px;width:200px;text-align:right;color:#1e2230;">-7.77</div>
<div class="t" style="left:-124.3px;top:161.67px;font-size:10px;line-height:12px;width:200px;text-align:right;color:#1e2230;">-0.93</div>
<div class="t" style="left:-82.3px;top:161.67px;font-size:10px;line-height:12px;width:200px;text-align:right;color:#1e2230;">210.08</div>
<div class="t" style="left:-166.3px;top:177.53px;font-size:10px;line-height:12px;width:200px;text-align:right;color:#1e2230;">-7.05</div>
<div class="t" style="left:-124.3px;top:177.53px;font-size:10px;line-height:12px;width:200px;text-align:right;color:#1e2230;">-0.89</div>
<div class="t" style="left:-82.3px;top:177.53px;font-size:10px;line-height:12px;width:200px;text-align:right;color:#1e2230;">195.06</div>
<div class="t" style="left:-166.3px;top:193.38px;font-size:10px;line-height:12px;width:200px;text-align:right;color:#1e2230;">-6.41</div>
<div class="t" style="left:-124.3px;top:193.38px;font-size:10px;line-height:12px;width:200px;text-align:right;color:#1e2230;">-0.85</div>
<div class="t" style="left:-82.3px;top:193.38px;font-size:10px;line-height:12px;width:200px;text-align:right;color:#1e2230;">181.29</div>
<div class="t" style="left:-40.30000000000001px;top:193.38px;font-size:10px;line-height:12px;width:200px;text-align:right;color:#1e2230;">23.54</div>
<div class="t" style="left:44.69999999999999px;top:193.38px;font-size:10px;line-height:12px;width:200px;text-align:right;color:#1e2230;">+2</div>
<div class="t" style="left:-166.3px;top:209.25px;font-size:10px;line-height:12px;width:200px;text-align:right;color:#1e2230;">-5.85</div>
<div class="t" style="left:-124.3px;top:209.25px;font-size:10px;line-height:12px;width:200px;text-align:right;color:#1e2230;">-0.82</div>
<div class="t" style="left:-82.3px;top:209.25px;font-size:10px;line-height:12px;width:200px;text-align:right;color:#1e2230;">168.79</div>
<div class="t" style="left:-166.3px;top:225.11px;font-size:10px;line-height:12px;width:200px;text-align:right;color:#1e2230;">-5.36</div>
<div class="t" style="left:-124.3px;top:225.11px;font-size:10px;line-height:12px;width:200px;text-align:right;color:#1e2230;">-0.78</div>
<div class="t" style="left:-82.3px;top:225.11px;font-size:10px;line-height:12px;width:200px;text-align:right;color:#1e2230;">157.61</div>
<div class="t" style="left:-166.3px;top:240.97px;font-size:10px;line-height:12px;width:200px;text-align:right;color:#1e2230;">-4.90</div>
<div class="t" style="left:-124.3px;top:240.97px;font-size:10px;line-height:12px;width:200px;text-align:right;color:#1e2230;">-0.75</div>
<div class="t" style="left:-82.3px;top:240.97px;font-size:10px;line-height:12px;width:200px;text-align:right;color:#1e2230;">146.68</div>
<div class="t" style="left:-166.3px;top:256.82px;font-size:10px;line-height:12px;width:200px;text-align:right;color:#1e2230;">-4.50</div>
<div class="t" style="left:-124.3px;top:256.82px;font-size:10px;line-height:12px;width:200px;text-align:right;color:#1e2230;">-0.72</div>
<div class="t" style="left:-82.3px;top:256.82px;font-size:10px;line-height:12px;width:200px;text-align:right;color:#1e2230;">137.08</div>
<div class="t" style="left:-166.3px;top:272.69px;font-size:10px;line-height:12px;width:200px;text-align:right;color:#1e2230;">-4.17</div>
<div class="t" style="left:-124.3px;top:272.69px;font-size:10px;line-height:12px;width:200px;text-align:right;color:#1e2230;">-0.69</div>
<div class="t" style="left:-82.3px;top:272.69px;font-size:10px;line-height:12px;width:200px;text-align:right;color:#1e2230;">128.87</div>
</div>
<div class="a" style="left:164px;top:459.3px;width:39px;height:13px;background:#fdf0b8"></div>
<div class="a" style="left:202px;top:460px;width:1px;height:11px;background:#333"></div>
<div class="a" style="left:251px;top:297px;width:295px;height:296px;background:#fff;border:1px solid #b9c1cc;box-sizing:border-box"></div>
<div class="a" style="left:252px;top:297px;width:293px;height:17.80000000000001px;background:#f3f6fa"></div>
<div class="a" style="left:252px;top:314.8px;width:279px;height:15.86px;background:#a9c2e0"></div>
<div class="a" style="left:252px;top:330.66px;width:279px;height:15.86px;background:#a9c2e0"></div>
<div class="a" style="left:252px;top:346.52px;width:279px;height:15.86px;background:#a9c2e0"></div>
<div class="a" style="left:252px;top:362.38px;width:279px;height:15.86px;background:#a9c2e0"></div>
<div class="a" style="left:252px;top:378.24px;width:279px;height:15.86px;background:#a9c2e0"></div>
<div class="a" style="left:252px;top:394.1px;width:279px;height:15.86px;background:#c8e5ea"></div>
<div class="a" style="left:252px;top:409.96000000000004px;width:279px;height:15.86px;background:#c8e5ea"></div>
<div class="a" style="left:252px;top:425.82px;width:279px;height:15.86px;background:#c8e5ea"></div>
<div class="a" style="left:252px;top:441.68px;width:279px;height:15.86px;background:#c8e5ea"></div>
<div class="a" style="left:252px;top:457.54px;width:279px;height:15.86px;background:#fffaee"></div>
<div class="a" style="left:252px;top:473.4px;width:279px;height:15.86px;background:#c8e5ea"></div>
<div class="a" style="left:252px;top:489.26px;width:279px;height:15.86px;background:#c8e5ea"></div>
<div class="a" style="left:252px;top:505.12px;width:279px;height:15.86px;background:#c8e5ea"></div>
<div class="a" style="left:252px;top:520.98px;width:279px;height:15.86px;background:#c8e5ea"></div>
<div class="a" style="left:252px;top:536.84px;width:279px;height:15.86px;background:#c8e5ea"></div>
<div class="a" style="left:252px;top:330px;width:279px;height:1px;background:#c8d4e6"></div>
<div class="a" style="left:252px;top:346px;width:279px;height:1px;background:#c8d4e6"></div>
<div class="a" style="left:252px;top:362px;width:279px;height:1px;background:#c8d4e6"></div>
<div class="a" style="left:252px;top:378px;width:279px;height:1px;background:#c8d4e6"></div>
<div class="a" style="left:252px;top:394px;width:279px;height:1px;background:#d4e2e8"></div>
<div class="a" style="left:252px;top:409px;width:279px;height:1px;background:#d4e2e8"></div>
<div class="a" style="left:252px;top:425px;width:279px;height:1px;background:#d4e2e8"></div>
<div class="a" style="left:252px;top:441px;width:279px;height:1px;background:#d4e2e8"></div>
<div class="a" style="left:252px;top:457px;width:279px;height:1px;background:#e3e6ec"></div>
<div class="a" style="left:252px;top:473px;width:279px;height:1px;background:#d4e2e8"></div>
<div class="a" style="left:252px;top:489px;width:279px;height:1px;background:#d4e2e8"></div>
<div class="a" style="left:252px;top:505px;width:279px;height:1px;background:#d4e2e8"></div>
<div class="a" style="left:252px;top:520px;width:279px;height:1px;background:#d4e2e8"></div>
<div class="a" style="left:252px;top:536px;width:279px;height:1px;background:#d4e2e8"></div>
<div class="a" style="left:252px;top:552px;width:279px;height:1px;background:#e3e6ec"></div>
<div class="a" style="left:252px;top:568px;width:279px;height:1px;background:#e3e6ec"></div>
<div class="a" style="left:252px;top:584px;width:279px;height:1px;background:#e3e6ec"></div>
<div class="a" style="left:291px;top:297px;width:1px;height:295px;background:#dadee6"></div>
<div class="a" style="left:330px;top:297px;width:1px;height:295px;background:#dadee6"></div>
<div class="a" style="left:370px;top:297px;width:1px;height:295px;background:#dadee6"></div>
<div class="a" style="left:410px;top:297px;width:1px;height:295px;background:#dadee6"></div>
<div class="a" style="left:450px;top:297px;width:1px;height:295px;background:#dadee6"></div>
<div class="a" style="left:490px;top:297px;width:1px;height:295px;background:#dadee6"></div>
<div class="a" style="left:531px;top:297px;width:1px;height:295px;background:#dadee6"></div>
<div class="t" style="left:121.5px;top:300.44px;font-size:10px;line-height:12px;width:300px;text-align:center;color:#2c3646;">Mid</div>
<div class="t" style="left:161.0px;top:300.44px;font-size:10px;line-height:12px;width:300px;text-align:center;color:#2c3646;">Delta</div>
<div class="t" style="left:200.5px;top:300.44px;font-size:10px;line-height:12px;width:300px;text-align:center;color:#2c3646;">Theta</div>
<div class="t" style="left:240.5px;top:300.44px;font-size:10px;line-height:12px;width:300px;text-align:center;color:#2c3646;">Vega</div>
<div class="t" style="left:280.5px;top:300.44px;font-size:10px;line-height:12px;width:300px;text-align:center;color:#2c3646;">OrigP...</div>
<div class="t" style="left:320.5px;top:300.44px;font-size:10px;line-height:12px;width:300px;text-align:center;color:#2c3646;">Model</div>
<div class="t" style="left:361.0px;top:300.44px;font-size:10px;line-height:12px;width:300px;text-align:center;color:#2c3646;">Pos</div>
<div class="a" style="left:252px;top:315px;width:279px;height:277px;overflow:hidden">
<div class="t" style="left:-163.3px;top:3.07px;font-size:10px;line-height:12px;width:200px;text-align:right;color:#2a9040;">30.05</div>
<div class="t" style="left:-124.30000000000001px;top:3.07px;font-size:10px;line-height:12px;width:200px;text-align:right;color:#1e2230;">-23.03</div>
<div class="t" style="left:-84.30000000000001px;top:3.07px;font-size:10px;line-height:12px;width:200px;text-align:right;color:#1e2230;">-1.17</div>
<div class="t" style="left:-44.30000000000001px;top:3.07px;font-size:10px;line-height:12px;width:200px;text-align:right;color:#1e2230;">468.17</div>
<div class="t" style="left:-163.3px;top:18.93px;font-size:10px;line-height:12px;width:200px;text-align:right;color:#e8242c;">27.10</div>
<div class="t" style="left:-124.30000000000001px;top:18.93px;font-size:10px;line-height:12px;width:200px;text-align:right;color:#1e2230;">-20.58</div>
<div class="t" style="left:-84.30000000000001px;top:18.93px;font-size:10px;line-height:12px;width:200px;text-align:right;color:#1e2230;">-1.16</div>
<div class="t" style="left:-44.30000000000001px;top:18.93px;font-size:10px;line-height:12px;width:200px;text-align:right;color:#1e2230;">438.79</div>
<div class="t" style="left:-163.3px;top:34.79px;font-size:10px;line-height:12px;width:200px;text-align:right;color:#e8242c;">24.55</div>
<div class="t" style="left:-124.30000000000001px;top:34.79px;font-size:10px;line-height:12px;width:200px;text-align:right;color:#1e2230;">-18.46</div>
<div class="t" style="left:-84.30000000000001px;top:34.79px;font-size:10px;line-height:12px;width:200px;text-align:right;color:#1e2230;">-1.14</div>
<div class="t" style="left:-44.30000000000001px;top:34.79px;font-size:10px;line-height:12px;width:200px;text-align:right;color:#1e2230;">410.64</div>
<div class="t" style="left:-163.3px;top:50.65px;font-size:10px;line-height:12px;width:200px;text-align:right;color:#e8242c;">22.30</div>
<div class="t" style="left:-124.30000000000001px;top:50.65px;font-size:10px;line-height:12px;width:200px;text-align:right;color:#1e2230;">-16.59</div>
<div class="t" style="left:-84.30000000000001px;top:50.65px;font-size:10px;line-height:12px;width:200px;text-align:right;color:#1e2230;">-1.11</div>
<div class="t" style="left:-44.30000000000001px;top:50.65px;font-size:10px;line-height:12px;width:200px;text-align:right;color:#1e2230;">383.79</div>
<div class="t" style="left:-163.3px;top:66.51px;font-size:10px;line-height:12px;width:200px;text-align:right;color:#e8242c;">20.30</div>
<div class="t" style="left:-124.30000000000001px;top:66.51px;font-size:10px;line-height:12px;width:200px;text-align:right;color:#1e2230;">-14.95</div>
<div class="t" style="left:-84.30000000000001px;top:66.51px;font-size:10px;line-height:12px;width:200px;text-align:right;color:#1e2230;">-1.09</div>
<div class="t" style="left:-44.30000000000001px;top:66.51px;font-size:10px;line-height:12px;width:200px;text-align:right;color:#1e2230;">358.35</div>
<div class="t" style="left:-163.3px;top:82.37px;font-size:10px;line-height:12px;width:200px;text-align:right;color:#e8242c;">18.50</div>
<div class="t" style="left:-124.30000000000001px;top:82.37px;font-size:10px;line-height:12px;width:200px;text-align:right;color:#1e2230;">-13.49</div>
<div class="t" style="left:-84.30000000000001px;top:82.37px;font-size:10px;line-height:12px;width:200px;text-align:right;color:#1e2230;">-1.06</div>
<div class="t" style="left:-44.30000000000001px;top:82.37px;font-size:10px;line-height:12px;width:200px;text-align:right;color:#1e2230;">334.27</div>
<div class="t" style="left:-163.3px;top:98.23px;font-size:10px;line-height:12px;width:200px;text-align:right;color:#e8242c;">16.70</div>
<div class="t" style="left:-124.30000000000001px;top:98.23px;font-size:10px;line-height:12px;width:200px;text-align:right;color:#1e2230;">-12.12</div>
<div class="t" style="left:-84.30000000000001px;top:98.23px;font-size:10px;line-height:12px;width:200px;text-align:right;color:#1e2230;">-1.01</div>
<div class="t" style="left:-44.30000000000001px;top:98.23px;font-size:10px;line-height:12px;width:200px;text-align:right;color:#1e2230;">310.26</div>
<div class="t" style="left:-163.3px;top:114.09px;font-size:10px;line-height:12px;width:200px;text-align:right;color:#e8242c;">15.25</div>
<div class="t" style="left:-124.30000000000001px;top:114.09px;font-size:10px;line-height:12px;width:200px;text-align:right;color:#1e2230;">-10.96</div>
<div class="t" style="left:-84.30000000000001px;top:114.09px;font-size:10px;line-height:12px;width:200px;text-align:right;color:#1e2230;">-0.98</div>
<div class="t" style="left:-44.30000000000001px;top:114.09px;font-size:10px;line-height:12px;width:200px;text-align:right;color:#1e2230;">288.94</div>
<div class="t" style="left:-163.3px;top:129.95px;font-size:10px;line-height:12px;width:200px;text-align:right;color:#e8242c;">13.95</div>
<div class="t" style="left:-124.30000000000001px;top:129.95px;font-size:10px;line-height:12px;width:200px;text-align:right;color:#1e2230;">-9.93</div>
<div class="t" style="left:-84.30000000000001px;top:129.95px;font-size:10px;line-height:12px;width:200px;text-align:right;color:#1e2230;">-0.94</div>
<div class="t" style="left:-44.30000000000001px;top:129.95px;font-size:10px;line-height:12px;width:200px;text-align:right;color:#1e2230;">269.05</div>
<div class="t" style="left:-163.3px;top:145.81px;font-size:10px;line-height:12px;width:200px;text-align:right;color:#e8242c;">12.80</div>
<div class="t" style="left:-124.30000000000001px;top:145.81px;font-size:10px;line-height:12px;width:200px;text-align:right;color:#1e2230;">-9.03</div>
<div class="t" style="left:-84.30000000000001px;top:145.81px;font-size:10px;line-height:12px;width:200px;text-align:right;color:#1e2230;">-0.91</div>
<div class="t" style="left:-44.30000000000001px;top:145.81px;font-size:10px;line-height:12px;width:200px;text-align:right;color:#1e2230;">250.69</div>
<div class="t" style="left:-163.3px;top:161.67px;font-size:10px;line-height:12px;width:200px;text-align:right;color:#e8242c;">11.85</div>
<div class="t" style="left:-124.30000000000001px;top:161.67px;font-size:10px;line-height:12px;width:200px;text-align:right;color:#1e2230;">-8.25</div>
<div class="t" style="left:-84.30000000000001px;top:161.67px;font-size:10px;line-height:12px;width:200px;text-align:right;color:#1e2230;">-0.88</div>
<div class="t" style="left:-44.30000000000001px;top:161.67px;font-size:10px;line-height:12px;width:200px;text-align:right;color:#1e2230;">234.43</div>
<div class="t" style="left:-163.3px;top:177.53px;font-size:10px;line-height:12px;width:200px;text-align:right;color:#e8242c;">10.80</div>
<div class="t" style="left:-124.30000000000001px;top:177.53px;font-size:10px;line-height:12px;width:200px;text-align:right;color:#1e2230;">-7.47</div>
<div class="t" style="left:-84.30000000000001px;top:177.53px;font-size:10px;line-height:12px;width:200px;text-align:right;color:#1e2230;">-0.84</div>
<div class="t" style="left:-44.30000000000001px;top:177.53px;font-size:10px;line-height:12px;width:200px;text-align:right;color:#1e2230;">217.51</div>
<div class="t" style="left:-163.3px;top:193.38px;font-size:10px;line-height:12px;width:200px;text-align:right;color:#e8242c;">9.95</div>
<div class="t" style="left:-124.30000000000001px;top:193.38px;font-size:10px;line-height:12px;width:200px;text-align:right;color:#1e2230;">-6.82</div>
<div class="t" style="left:-84.30000000000001px;top:193.38px;font-size:10px;line-height:12px;width:200px;text-align:right;color:#1e2230;">-0.80</div>
<div class="t" style="left:-44.30000000000001px;top:193.38px;font-size:10px;line-height:12px;width:200px;text-align:right;color:#1e2230;">202.76</div>
<div class="t" style="left:-163.3px;top:209.25px;font-size:10px;line-height:12px;width:200px;text-align:right;color:#e8242c;">9.20</div>
<div class="t" style="left:-124.30000000000001px;top:209.25px;font-size:10px;line-height:12px;width:200px;text-align:right;color:#1e2230;">-6.24</div>
<div class="t" style="left:-84.30000000000001px;top:209.25px;font-size:10px;line-height:12px;width:200px;text-align:right;color:#1e2230;">-0.77</div>
<div class="t" style="left:-44.30000000000001px;top:209.25px;font-size:10px;line-height:12px;width:200px;text-align:right;color:#1e2230;">189.29</div>
<div class="t" style="left:-163.3px;top:225.11px;font-size:10px;line-height:12px;width:200px;text-align:right;color:#e8242c;">8.55</div>
<div class="t" style="left:-124.30000000000001px;top:225.11px;font-size:10px;line-height:12px;width:200px;text-align:right;color:#1e2230;">-5.74</div>
<div class="t" style="left:-84.30000000000001px;top:225.11px;font-size:10px;line-height:12px;width:200px;text-align:right;color:#1e2230;">-0.74</div>
<div class="t" style="left:-44.30000000000001px;top:225.11px;font-size:10px;line-height:12px;width:200px;text-align:right;color:#1e2230;">177.15</div>
<div class="t" style="left:-163.3px;top:240.97px;font-size:10px;line-height:12px;width:200px;text-align:right;color:#e8242c;">7.95</div>
<div class="t" style="left:-124.30000000000001px;top:240.97px;font-size:10px;line-height:12px;width:200px;text-align:right;color:#1e2230;">-5.28</div>
<div class="t" style="left:-84.30000000000001px;top:240.97px;font-size:10px;line-height:12px;width:200px;text-align:right;color:#1e2230;">-0.71</div>
<div class="t" style="left:-44.30000000000001px;top:240.97px;font-size:10px;line-height:12px;width:200px;text-align:right;color:#1e2230;">165.81</div>
<div class="t" style="left:-163.3px;top:256.82px;font-size:10px;line-height:12px;width:200px;text-align:right;color:#e8242c;">7.35</div>
<div class="t" style="left:-124.30000000000001px;top:256.82px;font-size:10px;line-height:12px;width:200px;text-align:right;color:#1e2230;">-4.84</div>
<div class="t" style="left:-84.30000000000001px;top:256.82px;font-size:10px;line-height:12px;width:200px;text-align:right;color:#1e2230;">-0.68</div>
<div class="t" style="left:-44.30000000000001px;top:256.82px;font-size:10px;line-height:12px;width:200px;text-align:right;color:#1e2230;">154.69</div>
<div class="t" style="left:-163.3px;top:272.69px;font-size:10px;line-height:12px;width:200px;text-align:right;color:#e8242c;">6.90</div>
<div class="t" style="left:-124.30000000000001px;top:272.69px;font-size:10px;line-height:12px;width:200px;text-align:right;color:#1e2230;">-4.48</div>
<div class="t" style="left:-84.30000000000001px;top:272.69px;font-size:10px;line-height:12px;width:200px;text-align:right;color:#1e2230;">-0.66</div>
<div class="t" style="left:-44.30000000000001px;top:272.69px;font-size:10px;line-height:12px;width:200px;text-align:right;color:#1e2230;">145.52</div>
</div>
<div class="a" style="left:531px;top:315px;width:14px;height:277px;background:#d8dde6"></div>
<svg class="a" style="left:535px;top:320px" width="7" height="4"><path d="M0 4H7L3.5 0Z" fill="#6a7282"/></svg>
<svg class="a" style="left:535px;top:585px" width="7" height="4"><path d="M0 0H7L3.5 4Z" fill="#6a7282"/></svg>
<div class="a" style="left:533.5px;top:435px;width:9.5px;height:19.5px;background:#a4acb8"></div>
<svg class="a" style="left:550px;top:402px" width="4" height="13"><g fill="#b4bcc8"><rect x="0" y="0.0" width="2" height="2"/><rect x="2" y="2.5" width="2" height="2"/><rect x="0" y="5.0" width="2" height="2"/><rect x="2" y="7.5" width="2" height="2"/><rect x="0" y="10.0" width="2" height="2"/></g></svg>
<svg class="a" style="left:214px;top:597.2px" width="14" height="5"><g fill="#8a98ae" opacity=".8"><rect x="0" y="0" width="1.3" height="1.3"/><rect x="0" y="3" width="1.3" height="1.3"/><rect x="3" y="0" width="1.3" height="1.3"/><rect x="3" y="3" width="1.3" height="1.3"/><rect x="6" y="0" width="1.3" height="1.3"/><rect x="6" y="3" width="1.3" height="1.3"/><rect x="9" y="0" width="1.3" height="1.3"/><rect x="9" y="3" width="1.3" height="1.3"/><rect x="12" y="0" width="1.3" height="1.3"/><rect x="12" y="3" width="1.3" height="1.3"/><rect x="1.5" y="1.5" width="1.1" height="1.1"/><rect x="4.5" y="1.5" width="1.1" height="1.1"/><rect x="7.5" y="1.5" width="1.1" height="1.1"/><rect x="10.5" y="1.5" width="1.1" height="1.1"/></g></svg>
<div class="a" style="left:-2px;top:607px;width:103px;height:16px;background:#fff;border:1px solid #b8c0cc;box-sizing:border-box"></div>
<div class="t" style="left:-1.5px;top:610.03px;font-size:10px;line-height:12px;color:#1a1a1a;">bined</div>
<svg class="a" style="left:91px;top:613px" width="6" height="4"><path d="M0.5 0.5H5.5L3 3.5Z" fill="#555"/></svg>
<div class="a" style="left:108px;top:607px;width:68.5px;height:16px;background:#fff;border:1px solid #b8c0cc;box-sizing:border-box"></div>
<div class="t" style="left:111.5px;top:610.03px;font-size:10px;line-height:12px;color:#1a1a1a;">Auto</div>
<svg class="a" style="left:167px;top:613px" width="6" height="4"><path d="M0.5 0.5H5.5L3 3.5Z" fill="#555"/></svg>
<div class="a" style="left:428px;top:609px;width:9px;height:9px;background:#fff;border:1px solid #8e98a8;box-sizing:border-box"></div>
<div class="t" style="left:440.6px;top:609.00px;font-size:10.5px;line-height:13px;color:#283446;">Ignore Today&#39;s Trades</div>
<div class="a" style="left:-2px;top:626px;width:549px;height:60px;background:#fff;border:1px solid #b9c1cc;box-sizing:border-box"></div>
<div class="a" style="left:0px;top:627px;width:545px;height:16px;background:#f3f6fa"></div>
<div class="a" style="left:0px;top:643px;width:545px;height:1px;background:#dadee6"></div>
<div class="a" style="left:0px;top:659px;width:545px;height:1px;background:#e3e6ec"></div>
<div class="a" style="left:43px;top:627px;width:1px;height:48px;background:#dadee6"></div>
<div class="a" style="left:93px;top:627px;width:1px;height:48px;background:#dadee6"></div>
<div class="a" style="left:142px;top:627px;width:1px;height:48px;background:#dadee6"></div>
<div class="a" style="left:192px;top:627px;width:1px;height:48px;background:#dadee6"></div>
<div class="a" style="left:242px;top:627px;width:1px;height:48px;background:#dadee6"></div>
<div class="a" style="left:291px;top:627px;width:1px;height:48px;background:#dadee6"></div>
<div class="a" style="left:341px;top:627px;width:1px;height:48px;background:#dadee6"></div>
<div class="a" style="left:390px;top:627px;width:1px;height:48px;background:#dadee6"></div>
<div class="a" style="left:440px;top:627px;width:1px;height:48px;background:#dadee6"></div>
<div class="a" style="left:490px;top:627px;width:1px;height:48px;background:#dadee6"></div>
<div class="t" style="left:-131.0px;top:630.03px;font-size:10px;line-height:12px;width:300px;text-align:center;color:#2c3646;">Cost</div>
<div class="t" style="left:-81.5px;top:630.03px;font-size:10px;line-height:12px;width:300px;text-align:center;color:#2c3646;">Curr Cost</div>
<div class="t" style="left:-32.0px;top:630.03px;font-size:10px;line-height:12px;width:300px;text-align:center;color:#2c3646;">Commi...</div>
<div class="t" style="left:17.5px;top:630.03px;font-size:10px;line-height:12px;width:300px;text-align:center;color:#2c3646;">PnL</div>
<div class="t" style="left:67.5px;top:630.03px;font-size:10px;line-height:12px;width:300px;text-align:center;color:#2c3646;">PnL%</div>
<div class="t" style="left:117.0px;top:630.03px;font-size:10px;line-height:12px;width:300px;text-align:center;color:#2c3646;">Delta</div>
<div class="t" style="left:166.5px;top:630.03px;font-size:10px;line-height:12px;width:300px;text-align:center;color:#2c3646;">Gamma</div>
<div class="t" style="left:216.0px;top:630.03px;font-size:10px;line-height:12px;width:300px;text-align:center;color:#2c3646;">Theta</div>
<div class="t" style="left:265.5px;top:630.03px;font-size:10px;line-height:12px;width:300px;text-align:center;color:#2c3646;">Vega</div>
<div class="t" style="left:315.5px;top:630.03px;font-size:10px;line-height:12px;width:300px;text-align:center;color:#2c3646;">T/D</div>
<div class="t" style="left:368.5px;top:630.03px;font-size:10px;line-height:12px;width:300px;text-align:center;color:#2c3646;">Plot</div>
<div class="t" style="left:-159.3px;top:646.44px;font-size:10px;line-height:12px;width:200px;text-align:right;color:#1e2230;">674.38</div>
<div class="t" style="left:-109.3px;top:646.44px;font-size:10px;line-height:12px;width:200px;text-align:right;color:#1e2230;">-220.00</div>
<div class="t" style="left:-60.30000000000001px;top:646.44px;font-size:10px;line-height:12px;width:200px;text-align:right;color:#1e2230;">5.60</div>
<div class="t" style="left:-10.300000000000011px;top:646.44px;font-size:10px;line-height:12px;width:200px;text-align:right;color:#2a9040;">454.38</div>
<div class="t" style="left:39.69999999999999px;top:646.44px;font-size:10px;line-height:12px;width:200px;text-align:right;color:#2a9040;">4.87%</div>
<div class="t" style="left:88.69999999999999px;top:646.44px;font-size:10px;line-height:12px;width:200px;text-align:right;color:#1e2230;">1.72</div>
<div class="t" style="left:138.7px;top:646.44px;font-size:10px;line-height:12px;width:200px;text-align:right;color:#1e2230;">-0.01</div>
<div class="t" style="left:187.7px;top:646.44px;font-size:10px;line-height:12px;width:200px;text-align:right;color:#1e2230;">14.70</div>
<div class="t" style="left:237.7px;top:646.44px;font-size:10px;line-height:12px;width:200px;text-align:right;color:#1e2230;">-45.09</div>
<div class="t" style="left:287.7px;top:646.44px;font-size:10px;line-height:12px;width:200px;text-align:right;color:#1e2230;">8.5</div>
<svg class="a" style="left:513px;top:646.2px" width="10" height="10"><rect x="0.5" y="0.5" width="9" height="9" fill="#fff" stroke="#9aa4b4"/><path d="M2 5L4 7.2L8 2.5" stroke="#6a7282" stroke-width="1.1" fill="none"/></svg>
<div class="t" style="left:-159.3px;top:662.44px;font-size:10px;line-height:12px;width:200px;text-align:right;color:#1e2230;">1,168.78</div>
<div class="t" style="left:-109.3px;top:662.44px;font-size:10px;line-height:12px;width:200px;text-align:right;color:#1e2230;">-720.00</div>
<div class="t" style="left:-60.30000000000001px;top:662.44px;font-size:10px;line-height:12px;width:200px;text-align:right;color:#1e2230;">11.20</div>
<div class="t" style="left:-10.300000000000011px;top:662.44px;font-size:10px;line-height:12px;width:200px;text-align:right;color:#2a9040;">448.78</div>
<div class="t" style="left:39.69999999999999px;top:662.44px;font-size:10px;line-height:12px;width:200px;text-align:right;color:#2a9040;">2.38%</div>
<div class="t" style="left:88.69999999999999px;top:662.44px;font-size:10px;line-height:12px;width:200px;text-align:right;color:#1e2230;">5.81</div>
<div class="t" style="left:138.7px;top:662.44px;font-size:10px;line-height:12px;width:200px;text-align:right;color:#1e2230;">-0.04</div>
<div class="t" style="left:187.7px;top:662.44px;font-size:10px;line-height:12px;width:200px;text-align:right;color:#1e2230;">31.82</div>
<div class="t" style="left:237.7px;top:662.44px;font-size:10px;line-height:12px;width:200px;text-align:right;color:#1e2230;">-120.93</div>
<div class="t" style="left:287.7px;top:662.44px;font-size:10px;line-height:12px;width:200px;text-align:right;color:#1e2230;">5.5</div>
<svg class="a" style="left:513px;top:662.2px" width="10" height="10"><rect x="0.5" y="0.5" width="9" height="9" fill="#fff" stroke="#9aa4b4"/><path d="M2 5L4 7.2L8 2.5" stroke="#6a7282" stroke-width="1.1" fill="none"/></svg>
<div class="a" style="left:557px;top:139px;width:1px;height:536px;background:#aeb6c4"></div>
<div class="a" style="left:557px;top:139px;width:523px;height:45px;background:#d6dbe7"></div>
<div class="a" style="left:622.5px;top:141px;width:67.79999999999995px;height:22px;background:#d0d6e2;border:1px solid #aab3c2;box-sizing:border-box"></div>
<div class="t" style="left:506.4px;top:145.54px;font-size:10px;line-height:12px;width:300px;text-align:center;color:#283446;">Price Chart</div>
<div class="a" style="left:689.3px;top:141px;width:107.30000000000007px;height:22px;background:#d0d6e2;border:1px solid #aab3c2;box-sizing:border-box"></div>
<div class="t" style="left:592.95px;top:145.54px;font-size:10px;line-height:12px;width:300px;text-align:center;color:#283446;">Movement Analysis</div>
<div class="a" style="left:795.6px;top:141px;width:55.0px;height:22px;background:#d0d6e2;border:1px solid #aab3c2;box-sizing:border-box"></div>
<div class="t" style="left:673.1px;top:145.54px;font-size:10px;line-height:12px;width:300px;text-align:center;color:#283446;">Volatility</div>
<div class="a" style="left:849.6px;top:141px;width:135.10000000000002px;height:22px;background:#d0d6e2;border:1px solid #aab3c2;box-sizing:border-box"></div>
<div class="t" style="left:767.1500000000001px;top:145.54px;font-size:10px;line-height:12px;width:300px;text-align:center;color:#283446;">Statistics &amp; Fundamentals</div>
<div class="a" style="left:557px;top:141px;width:66.5px;height:22px;background:#d6dbe7;border:1px solid #aab3c2;border-bottom:none;box-sizing:border-box"></div>
<div class="a" style="left:983.7px;top:162px;width:97px;height:1px;background:#aab3c2"></div>
<div class="t" style="left:440.0px;top:145.54px;font-size:10px;line-height:12px;width:300px;text-align:center;color:#283446;">Risk Chart</div>
<div class="t" style="left:562.8px;top:169.24px;font-size:10px;line-height:12px;color:#283446;">Vol Adjust</div>
<div class="a" style="left:611.5px;top:165.3px;width:45px;height:16.3px;background:#fff;border:1px solid #b8c0cc;box-sizing:border-box"></div>
<div class="t" style="left:634.2px;top:168.84px;font-size:10px;line-height:12px;color:#1a1a1a;">0</div>
<svg class="a" style="left:646.5px;top:168px" width="7" height="12"><path d="M0.5 3.5H5.5L3 0.5Z" fill="#6a7282"/><path d="M0.5 7.5H5.5L3 10.5Z" fill="#6a7282"/></svg>
<div class="t" style="left:988.8px;top:168.64px;font-size:10px;line-height:12px;color:#283446;">Projection</div>
<div class="a" style="left:1036px;top:165.7px;width:60px;height:16.5px;background:#fff;border:1px solid #b8c0cc;box-sizing:border-box"></div>
<div class="t" style="left:1038.7px;top:168.64px;font-size:10px;line-height:12px;color:#1a1a1a;">29/05/2025</div>
<div class="a" style="left:558px;top:184px;width:522px;height:471px;background:#fff"></div>
<div class="a" style="left:558px;top:655px;width:522px;height:20px;background:#29354f"></div>
<div class="t" style="left:1043.8px;top:660.10px;font-size:10.5px;line-height:13px;color:#dfe3ea;">260%</div>
<div class="a" style="left:1075px;top:665px;width:5px;height:1px;background:#dfe3ea"></div>
<svg class="a" style="left:0;top:0" width="1080" height="675" font-family="Liberation Sans">
<defs><clipPath id="cp"><rect x="558" y="184" width="522" height="471"/></clipPath></defs><g clip-path="url(#cp)">
<rect x="799.2" y="200" width="157.5" height="274.5" fill="#92cad9"/>
<rect x="838" y="200" width="79.5" height="274.5" fill="#4b7fbf"/>
<path d="M606 200.5H1080 M606 216.5H1080 M606 233.5H1080 M606 249.5H1080 M606 265.5H1080 M606 281.5H1080 M606 297.5H1080 M606 313.5H1080 M606 329.5H1080 M606 345.5H1080 M606 361.5H1080 M606 378.5H1080 M606 394.5H1080 M606 410.5H1080 M606 426.5H1080 M606 442.5H1080 M606 458.5H1080 M606 474.5H1080 M606.5 197V475 M646.5 197V475 M686.5 197V475 M726.5 197V475 M766.5 197V475 M806.5 197V475 M846.5 197V475 M886.5 197V475 M926.5 197V475 M966.5 197V475 M1006.5 197V475 M1046.5 197V475 M1087.5 197V475" stroke="#e4e4e4" stroke-width="1" fill="none"/>
<path d="M799 200.5H957 M799 216.5H957 M799 233.5H957 M799 249.5H957 M799 265.5H957 M799 281.5H957 M799 297.5H957 M799 313.5H957 M799 329.5H957 M799 345.5H957 M799 361.5H957 M799 378.5H957 M799 394.5H957 M799 410.5H957 M799 426.5H957 M799 442.5H957 M799 458.5H957 M799 474.5H957 M806.5 200V475 M846.5 200V475 M886.5 200V475 M926.5 200V475" stroke="#e0e8ec" stroke-opacity=".55" stroke-width="1" fill="none"/>
<path d="M601 200.5H606 M601 216.5H606 M601 233.5H606 M601 249.5H606 M601 265.5H606 M601 281.5H606 M601 297.5H606 M601 313.5H606 M601 329.5H606 M601 345.5H606 M601 361.5H606 M601 378.5H606 M601 394.5H606 M601 410.5H606 M601 426.5H606 M601 442.5H606 M601 458.5H606 M601 474.5H606" stroke="#e4e4e4"/>
<text transform="translate(809.8000000000001 203.5) rotate(-90)" text-anchor="end" font-size="8.6" fill="#5b8fc4">5790.25</text>
<text transform="translate(847.3000000000001 203.5) rotate(-90)" text-anchor="end" font-size="8.6" fill="#86aedc">5839.40</text>
<text transform="translate(916.8000000000001 203.5) rotate(-90)" text-anchor="end" font-size="8.6" fill="#86aedc">5937.70</text>
<text transform="translate(955.6 203.5) rotate(-90)" text-anchor="end" font-size="8.6" fill="#5b8fc4">5986.85</text>
<text x="606.5" y="195.3" text-anchor="middle" font-size="8.6" fill="#404040">-5.7%</text>
<text x="646.57" y="195.3" text-anchor="middle" font-size="8.6" fill="#404040">-4.9%</text>
<text x="686.64" y="195.3" text-anchor="middle" font-size="8.6" fill="#404040">-4.1%</text>
<text x="726.71" y="195.3" text-anchor="middle" font-size="8.6" fill="#404040">-3.2%</text>
<text x="766.78" y="195.3" text-anchor="middle" font-size="8.6" fill="#404040">-2.4%</text>
<text x="806.85" y="195.3" text-anchor="middle" font-size="8.6" fill="#404040">-1.5%</text>
<text x="846.92" y="195.3" text-anchor="middle" font-size="8.6" fill="#404040">-0.7%</text>
<text x="886.99" y="195.3" text-anchor="middle" font-size="8.6" fill="#404040">0.2%</text>
<text x="927.06" y="195.3" text-anchor="middle" font-size="8.6" fill="#404040">1.0%</text>
<text x="967.13" y="195.3" text-anchor="middle" font-size="8.6" fill="#404040">1.9%</text>
<text x="1007.2" y="195.3" text-anchor="middle" font-size="8.6" fill="#404040">2.7%</text>
<text x="1047.27" y="195.3" text-anchor="middle" font-size="8.6" fill="#404040">3.6%</text>
<text x="1087.34" y="195.3" text-anchor="middle" font-size="8.6" fill="#404040">4.4%</text>
<rect x="865.5" y="184.5" width="25" height="11" fill="#f0f4fa" stroke="#7f8a98"/>
<text x="878" y="194" text-anchor="middle" font-size="8.6" fill="#404040">0.0%</text>
<text x="600" y="204.3" text-anchor="end" font-size="8.6" fill="#404040">118%</text>
<text x="600" y="220.4" text-anchor="end" font-size="8.6" fill="#404040">107%</text>
<text x="600" y="236.50000000000003" text-anchor="end" font-size="8.6" fill="#404040">97%</text>
<text x="600" y="252.60000000000002" text-anchor="end" font-size="8.6" fill="#404040">86%</text>
<text x="600" y="268.7" text-anchor="end" font-size="8.6" fill="#404040">75%</text>
<text x="600" y="284.79999999999995" text-anchor="end" font-size="8.6" fill="#404040">64%</text>
<text x="600" y="300.9" text-anchor="end" font-size="8.6" fill="#404040">54%</text>
<text x="600" y="317.0" text-anchor="end" font-size="8.6" fill="#404040">43%</text>
<text x="600" y="333.1" text-anchor="end" font-size="8.6" fill="#404040">32%</text>
<text x="600" y="349.2" text-anchor="end" font-size="8.6" fill="#404040">21%</text>
<text x="600" y="365.29999999999995" text-anchor="end" font-size="8.6" fill="#404040">11%</text>
<text x="600" y="381.4" text-anchor="end" font-size="8.6" fill="#404040">0%</text>
<text x="600" y="397.5" text-anchor="end" font-size="8.6" fill="#404040">-11%</text>
<text x="600" y="413.6" text-anchor="end" font-size="8.6" fill="#404040">-21%</text>
<text x="600" y="429.70000000000005" text-anchor="end" font-size="8.6" fill="#404040">-32%</text>
<text x="600" y="445.8" text-anchor="end" font-size="8.6" fill="#404040">-43%</text>
<text x="600" y="461.9" text-anchor="end" font-size="8.6" fill="#404040">-54%</text>
<text x="600" y="478.0" text-anchor="end" font-size="8.6" fill="#404040">-64%</text>
<text x="606.5" y="486.6" text-anchor="middle" font-size="8.6" fill="#404040">5550</text>
<text x="646.57" y="486.6" text-anchor="middle" font-size="8.6" fill="#404040">5600</text>
<text x="686.64" y="486.6" text-anchor="middle" font-size="8.6" fill="#404040">5650</text>
<text x="726.71" y="486.6" text-anchor="middle" font-size="8.6" fill="#404040">5700</text>
<text x="766.78" y="486.6" text-anchor="middle" font-size="8.6" fill="#404040">5750</text>
<text x="806.85" y="486.6" text-anchor="middle" font-size="8.6" fill="#404040">5800</text>
<text x="846.92" y="486.6" text-anchor="middle" font-size="8.6" fill="#404040">5850</text>
<text x="886.99" y="486.6" text-anchor="middle" font-size="8.6" fill="#404040">5900</text>
<text x="927.06" y="486.6" text-anchor="middle" font-size="8.6" fill="#404040">5950</text>
<text x="967.13" y="486.6" text-anchor="middle" font-size="8.6" fill="#404040">6000</text>
<text x="1007.2" y="486.6" text-anchor="middle" font-size="8.6" fill="#404040">6050</text>
<text x="1047.27" y="486.6" text-anchor="middle" font-size="8.6" fill="#404040">6100</text>
<text x="1087.34" y="486.6" text-anchor="middle" font-size="8.6" fill="#404040">6150</text>
<path d="M606 377.5H1080" stroke="#3a3a3a" stroke-width="1"/>
<path d="M606 393.3 C611.7 392.1 627.8 388.6 640 386 C652.2 383.4 666.1 379.8 679.4 377.7 C692.7 375.6 705.1 374.7 720 373.5 C734.9 372.3 750.2 371.5 768.5 370.5 C786.8 369.5 811.9 368.5 830 367.3 C848.1 366.1 862.0 364.6 877 363.5 C892.0 362.4 899.5 361.8 920 361 C940.5 360.2 973.3 359.0 1000 358.5 C1026.7 358.0 1066.7 358.1 1080 358" stroke="#f06868" stroke-width="1.2" fill="none"/>
<clipPath id="cB2"><rect x="638.5" y="300" width="500" height="200"/></clipPath><path d="M606 398.9 C611.4 397.8 624.5 394.4 638.5 392 C652.5 389.6 672.4 386.8 690 384.5 C707.6 382.2 725.7 379.8 744 378 C762.3 376.2 784.0 374.7 800 373.5 C816.0 372.3 827.2 371.6 840 370.8 C852.8 370.0 863.7 369.1 877 368.5 C890.3 367.9 886.2 367.4 920 367 C953.8 366.6 1053.3 366.3 1080 366.2" stroke="#7f9cf0" stroke-width="1.1" fill="none" clip-path="url(#cB2)"/>
<clipPath id="cB"><rect x="600" y="300" width="38.5" height="200"/></clipPath><path d="M606 398.9 C611.4 397.8 624.5 394.4 638.5 392 C652.5 389.6 672.4 386.8 690 384.5 C707.6 382.2 725.7 379.8 744 378 C762.3 376.2 784.0 374.7 800 373.5 C816.0 372.3 827.2 371.6 840 370.8 C852.8 370.0 863.7 369.1 877 368.5 C890.3 367.9 886.2 367.4 920 367 C953.8 366.6 1053.3 366.3 1080 366.2" stroke="#f06868" stroke-width="1.1" fill="none" clip-path="url(#cB)"/>
<path d="M606 451.5 C614.2 446.6 636.3 432.6 655.4 422.2 C674.5 411.8 700.8 396.4 720.4 389 C740.0 381.6 755.0 381.2 773.3 378 C791.6 374.8 812.7 371.7 830 369.5 C847.3 367.3 862.0 366.2 877 365 C892.0 363.8 899.5 363.0 920 362 C940.5 361.0 973.3 359.7 1000 359 C1026.7 358.3 1066.7 358.2 1080 358" stroke="#f06060" stroke-width="1.2" fill="none"/>
<clipPath id="cD2"><rect x="759" y="300" width="400" height="200"/></clipPath><path d="M606 455.0 C611.0 452.1 626.0 443.0 636 437.71 C646.0 432.4 656.0 427.8 666 423.43 C676.0 419.1 686.0 415.2 696 411.65 C706.0 408.1 716.0 404.9 726 401.93 C736.0 399.0 746.0 396.4 756 393.91 C766.0 391.5 776.0 389.3 786 387.28 C796.0 385.3 806.0 383.5 816 381.82 C826.0 380.2 836.0 378.7 846 377.31 C856.0 375.9 866.0 374.7 876 373.59 C886.0 372.5 896.0 371.4 906 370.51 C916.0 369.6 926.0 368.8 936 367.98 C946.0 367.2 956.0 366.5 966 365.89 C976.0 365.3 986.0 364.7 996 364.16 C1006.0 363.6 1016.0 363.2 1026 362.73 C1036.0 362.3 1046.0 361.9 1056 361.56 C1066.0 361.2 1081.0 360.8 1086 360.59" stroke="#6cc06c" stroke-width="1.1" fill="none" clip-path="url(#cD2)"/>
<clipPath id="cD"><rect x="600" y="300" width="159" height="200"/></clipPath><path d="M606 455.0 C611.0 452.1 626.0 443.0 636 437.71 C646.0 432.4 656.0 427.8 666 423.43 C676.0 419.1 686.0 415.2 696 411.65 C706.0 408.1 716.0 404.9 726 401.93 C736.0 399.0 746.0 396.4 756 393.91 C766.0 391.5 776.0 389.3 786 387.28 C796.0 385.3 806.0 383.5 816 381.82 C826.0 380.2 836.0 378.7 846 377.31 C856.0 375.9 866.0 374.7 876 373.59 C886.0 372.5 896.0 371.4 906 370.51 C916.0 369.6 926.0 368.8 936 367.98 C946.0 367.2 956.0 366.5 966 365.89 C976.0 365.3 986.0 364.7 996 364.16 C1006.0 363.6 1016.0 363.2 1026 362.73 C1036.0 362.3 1046.0 361.9 1056 361.56 C1066.0 361.2 1081.0 360.8 1086 360.59" stroke="#f06060" stroke-width="1.1" fill="none" clip-path="url(#cD)"/>
<path d="M606.3 207.7 L647 366.2 L1080 366.2" stroke="#4040d4" stroke-width="1.6" fill="none"/>
<path d="M606 361 L626 281 L647 358 L1080 358" stroke="#1e8a1e" stroke-width="1.6" fill="none"/>
<rect x="851.7" y="368" width="54" height="4.2" fill="#a89a98" opacity=".85"/>
<rect x="838" y="368.5" width="13" height="3" fill="#6a9ad8" opacity=".8"/>
<circle cx="877.8" cy="370.3" r="3" fill="#35d0d0" stroke="#1f3040" stroke-width="1"/>
</g>
<rect x="563" y="364" width="38.5" height="10.7" fill="#0a8a0a"/>
<text x="599.5" y="372.3" text-anchor="end" font-size="8.8" fill="#fff">5%</text>
<rect x="609.5" y="204.5" width="135.5" height="81.8" rx="4" fill="#e9edf3" fill-opacity=".8" stroke="#a2abb8"/>
<rect x="616.4" y="211.7" width="2.6" height="10.2" fill="#e84040"/>
<text x="619.6" y="220.1" font-size="8.8" xml:space="preserve"><tspan fill="#606060">-5.60 Realized PnL</tspan></text>
<rect x="616.4" y="223.45" width="2.6" height="10.2" fill="#4cb048"/>
<text x="619.6" y="231.85" font-size="8.8" xml:space="preserve"><tspan fill="#606060">-4 </tspan><tspan fill="#f05858">20jun.  5575 Put Δ</tspan></text>
<text x="738.3" y="231.85" text-anchor="end" font-size="8.8" fill="#f05858">-10.44</text>
<rect x="616.4" y="235.2" width="2.6" height="10.2" fill="#4cb048"/>
<text x="619.6" y="243.6" font-size="8.8" xml:space="preserve"><tspan fill="#606060">+4 </tspan><tspan fill="#5a5ae8">20jun.  5550 Put Δ</tspan></text>
<text x="738.3" y="243.6" text-anchor="end" font-size="8.8" fill="#5a5ae8">-9.42</text>
<rect x="616.4" y="246.95" width="2.6" height="10.2" fill="#6a88e8"/>
<text x="619.6" y="255.35" font-size="8.8" xml:space="preserve"><tspan fill="#606060">+2 </tspan><tspan fill="#5a5ae8">20jun.  5450 Put Δ</tspan></text>
<text x="738.3" y="255.35" text-anchor="end" font-size="8.8" fill="#5a5ae8">-6.41</text>
<rect x="616.4" y="258.7" width="2.6" height="10.2" fill="#8aa4ee"/>
<text x="619.6" y="267.1" font-size="8.8" xml:space="preserve"><tspan fill="#606060">+2 </tspan><tspan fill="#5a5ae8">20jun.  5600 Put Δ</tspan></text>
<text x="738.3" y="267.1" text-anchor="end" font-size="8.8" fill="#5a5ae8">-11.57</text>
<rect x="616.4" y="270.45" width="2.6" height="10.2" fill="#8aa4ee"/>
<text x="619.6" y="278.85" font-size="8.8" xml:space="preserve"><tspan fill="#606060">-4 </tspan><tspan fill="#f05858">20jun.  5550 Put Δ</tspan></text>
<text x="738.3" y="278.85" text-anchor="end" font-size="8.8" fill="#f05858">-9.42</text>
<rect x="609.7" y="423.5" width="97.8" height="46.4" rx="4" fill="#e9edf3" fill-opacity=".8" stroke="#a2abb8"/>
<text x="616.9" y="438.6" font-size="8.8" fill="#5aaa5a">20/06/2025 (0)</text>
<text x="616.9" y="450.3" font-size="8.8" fill="#f07070">09/06/2025 (11) T+11</text>
<text x="616.9" y="461.8" font-size="8.8" fill="#7ccc7c">29/05/2025 (22) T+0</text>
<rect x="561.5" y="492.2" width="540" height="158.8" rx="4.5" fill="#e8eef7" stroke="#8a94a4"/>
<text x="583.8" y="520.3000000000001" text-anchor="middle" font-size="8.8" fill="#6a7078">PnL</text>
<text x="583.8" y="556.9000000000001" text-anchor="middle" font-size="8.8" fill="#6a7078">Delta</text>
<text x="583.8" y="584.0" text-anchor="middle" font-size="8.8" fill="#6a7078">Gamma</text>
<text x="583.8" y="611.8000000000001" text-anchor="middle" font-size="8.8" fill="#6a7078">Theta</text>
<text x="583.8" y="639.1" text-anchor="middle" font-size="8.8" fill="#6a7078">Vega</text>
<g clip-path="url(#cp)">
<path d="M606 515.8H1080" stroke="#707070" stroke-width="1"/>
<rect x="606.0" y="515.8" width="20.5" height="9.7" fill="#f07272" stroke="#5a5a6a" stroke-width=".8"/>
<rect x="626.5" y="515.8" width="40.1" height="7.2" fill="#f07272" stroke="#5a5a6a" stroke-width=".8"/>
<rect x="666.6" y="515.8" width="40.1" height="5.0" fill="#f07272" stroke="#5a5a6a" stroke-width=".8"/>
<rect x="706.7" y="515.8" width="40.1" height="3.2" fill="#f07272" stroke="#5a5a6a" stroke-width=".8"/>
<rect x="746.8" y="515.8" width="40.1" height="1.7" fill="#f07272" stroke="#5a5a6a" stroke-width=".8"/>
<rect x="786.8" y="515.8" width="40.1" height="0.5" fill="#f07272" stroke="#5a5a6a" stroke-width=".8"/>
<rect x="826.9" y="515.4" width="40.1" height="0.4" fill="#5a72f0" stroke="#5a5a6a" stroke-width=".8"/>
<rect x="867.0" y="514.7" width="40.1" height="1.1" fill="#5a72f0" stroke="#5a5a6a" stroke-width=".8"/>
<rect x="907.0" y="514.2" width="40.1" height="1.6" fill="#5a72f0" stroke="#5a5a6a" stroke-width=".8"/>
<rect x="947.1" y="513.9" width="40.1" height="1.9" fill="#5a72f0" stroke="#5a5a6a" stroke-width=".8"/>
<rect x="987.2" y="513.7" width="40.1" height="2.1" fill="#5a72f0" stroke="#5a5a6a" stroke-width=".8"/>
<rect x="1027.2" y="513.5" width="40.1" height="2.3" fill="#5a72f0" stroke="#5a5a6a" stroke-width=".8"/>
<rect x="1067.3" y="513.4" width="40.1" height="2.4" fill="#5a72f0" stroke="#5a5a6a" stroke-width=".8"/>
<text x="606.5" y="505.40000000000003" text-anchor="middle" font-size="8.6" fill="#f26a6a">-50%</text>
<text x="606.5" y="515.3000000000001" text-anchor="middle" font-size="8.6" fill="#f26a6a">-4628</text>
<text x="646.57" y="505.40000000000003" text-anchor="middle" font-size="8.6" fill="#f26a6a">-37%</text>
<text x="646.57" y="515.3000000000001" text-anchor="middle" font-size="8.6" fill="#f26a6a">-3428</text>
<text x="686.64" y="505.40000000000003" text-anchor="middle" font-size="8.6" fill="#f26a6a">-26%</text>
<text x="686.64" y="515.3000000000001" text-anchor="middle" font-size="8.6" fill="#f26a6a">-2386</text>
<text x="726.71" y="505.40000000000003" text-anchor="middle" font-size="8.6" fill="#f26a6a">-16%</text>
<text x="726.71" y="515.3000000000001" text-anchor="middle" font-size="8.6" fill="#f26a6a">-1510</text>
<text x="766.78" y="505.40000000000003" text-anchor="middle" font-size="8.6" fill="#f26a6a">-9%</text>
<text x="766.78" y="515.3000000000001" text-anchor="middle" font-size="8.6" fill="#f26a6a">-797</text>
<text x="806.85" y="505.40000000000003" text-anchor="middle" font-size="8.6" fill="#f26a6a">-3%</text>
<text x="806.85" y="515.3000000000001" text-anchor="middle" font-size="8.6" fill="#f26a6a">-234</text>
<text x="846.92" y="524.6" text-anchor="middle" font-size="8.6" fill="#6e78f2">195</text>
<text x="846.92" y="532.7" text-anchor="middle" font-size="8.6" fill="#6e78f2">2%</text>
<text x="886.99" y="524.6" text-anchor="middle" font-size="8.6" fill="#6e78f2">513</text>
<text x="886.99" y="532.7" text-anchor="middle" font-size="8.6" fill="#6e78f2">5%</text>
<text x="927.06" y="524.6" text-anchor="middle" font-size="8.6" fill="#6e78f2">741</text>
<text x="927.06" y="532.7" text-anchor="middle" font-size="8.6" fill="#6e78f2">8%</text>
<text x="967.13" y="524.6" text-anchor="middle" font-size="8.6" fill="#6e78f2">898</text>
<text x="967.13" y="532.7" text-anchor="middle" font-size="8.6" fill="#6e78f2">10%</text>
<text x="1007.2" y="524.6" text-anchor="middle" font-size="8.6" fill="#6e78f2">1004</text>
<text x="1007.2" y="532.7" text-anchor="middle" font-size="8.6" fill="#6e78f2">11%</text>
<text x="1047.27" y="524.6" text-anchor="middle" font-size="8.6" fill="#6e78f2">1073</text>
<text x="1047.27" y="532.7" text-anchor="middle" font-size="8.6" fill="#6e78f2">12%</text>
<text x="1087.34" y="524.6" text-anchor="middle" font-size="8.6" fill="#6e78f2">1120</text>
<text x="1087.34" y="532.7" text-anchor="middle" font-size="8.6" fill="#6e78f2">12%</text>
<path d="M606 552.4H1080" stroke="#707070" stroke-width="1"/>
<rect x="606.0" y="543.5" width="20.5" height="8.9" fill="#5a72f0" stroke="#5a5a6a" stroke-width=".8"/>
<rect x="626.5" y="544.5" width="40.1" height="7.9" fill="#5a72f0" stroke="#5a5a6a" stroke-width=".8"/>
<rect x="666.6" y="545.7" width="40.1" height="6.7" fill="#5a72f0" stroke="#5a5a6a" stroke-width=".8"/>
<rect x="706.7" y="546.8" width="40.1" height="5.6" fill="#5a72f0" stroke="#5a5a6a" stroke-width=".8"/>
<rect x="746.8" y="548.0" width="40.1" height="4.4" fill="#5a72f0" stroke="#5a5a6a" stroke-width=".8"/>
<rect x="786.8" y="549.0" width="40.1" height="3.4" fill="#5a72f0" stroke="#5a5a6a" stroke-width=".8"/>
<rect x="826.9" y="549.8" width="40.1" height="2.6" fill="#5a72f0" stroke="#5a5a6a" stroke-width=".8"/>
<rect x="867.0" y="550.5" width="40.1" height="1.9" fill="#5a72f0" stroke="#5a5a6a" stroke-width=".8"/>
<rect x="907.0" y="551.1" width="40.1" height="1.3" fill="#5a72f0" stroke="#5a5a6a" stroke-width=".8"/>
<rect x="947.1" y="551.5" width="40.1" height="0.9" fill="#5a72f0" stroke="#5a5a6a" stroke-width=".8"/>
<rect x="987.2" y="551.8" width="40.1" height="0.6" fill="#5a72f0" stroke="#5a5a6a" stroke-width=".8"/>
<rect x="1027.2" y="552.0" width="40.1" height="0.4" fill="#5a72f0" stroke="#5a5a6a" stroke-width=".8"/>
<text x="606.5" y="561.2" text-anchor="middle" font-size="8.6" fill="#6e78f2">25.45</text>
<text x="646.57" y="561.2" text-anchor="middle" font-size="8.6" fill="#6e78f2">22.47</text>
<text x="686.64" y="561.2" text-anchor="middle" font-size="8.6" fill="#6e78f2">19.19</text>
<text x="726.71" y="561.2" text-anchor="middle" font-size="8.6" fill="#6e78f2">15.86</text>
<text x="766.78" y="561.2" text-anchor="middle" font-size="8.6" fill="#6e78f2">12.70</text>
<text x="806.85" y="561.2" text-anchor="middle" font-size="8.6" fill="#6e78f2">9.85</text>
<text x="846.92" y="561.2" text-anchor="middle" font-size="8.6" fill="#6e78f2">7.40</text>
<text x="886.99" y="561.2" text-anchor="middle" font-size="8.6" fill="#6e78f2">5.38</text>
<text x="927.06" y="561.2" text-anchor="middle" font-size="8.6" fill="#6e78f2">3.79</text>
<text x="967.13" y="561.2" text-anchor="middle" font-size="8.6" fill="#6e78f2">2.58</text>
<text x="1007.2" y="561.2" text-anchor="middle" font-size="8.6" fill="#6e78f2">1.70</text>
<text x="1047.27" y="561.2" text-anchor="middle" font-size="8.6" fill="#6e78f2">1.08</text>
<text x="1087.34" y="561.2" text-anchor="middle" font-size="8.6" fill="#6e78f2">0.65</text>
<path d="M606 580.4H1080" stroke="#707070" stroke-width="1"/>
<rect x="606.0" y="580.4" width="20.5" height="6.1" fill="#f07272" stroke="#5a5a6a" stroke-width=".8"/>
<rect x="626.5" y="580.4" width="40.1" height="7.3" fill="#f07272" stroke="#5a5a6a" stroke-width=".8"/>
<rect x="666.6" y="580.4" width="40.1" height="8.5" fill="#f07272" stroke="#5a5a6a" stroke-width=".8"/>
<rect x="706.7" y="580.4" width="40.1" height="8.5" fill="#f07272" stroke="#5a5a6a" stroke-width=".8"/>
<rect x="746.8" y="580.4" width="40.1" height="7.3" fill="#f07272" stroke="#5a5a6a" stroke-width=".8"/>
<rect x="786.8" y="580.4" width="40.1" height="6.1" fill="#f07272" stroke="#5a5a6a" stroke-width=".8"/>
<rect x="826.9" y="580.4" width="40.1" height="4.9" fill="#f07272" stroke="#5a5a6a" stroke-width=".8"/>
<rect x="867.0" y="580.4" width="40.1" height="4.9" fill="#f07272" stroke="#5a5a6a" stroke-width=".8"/>
<rect x="907.0" y="580.4" width="40.1" height="3.7" fill="#f07272" stroke="#5a5a6a" stroke-width=".8"/>
<rect x="947.1" y="580.4" width="40.1" height="2.4" fill="#f07272" stroke="#5a5a6a" stroke-width=".8"/>
<rect x="987.2" y="580.4" width="40.1" height="1.2" fill="#f07272" stroke="#5a5a6a" stroke-width=".8"/>
<rect x="1027.2" y="580.4" width="40.1" height="1.2" fill="#f07272" stroke="#5a5a6a" stroke-width=".8"/>
<rect x="1067.3" y="580.4" width="40.1" height="1.2" fill="#f07272" stroke="#5a5a6a" stroke-width=".8"/>
<text x="606.5" y="579.6" text-anchor="middle" font-size="8.6" fill="#f26a6a">-0.05</text>
<text x="646.57" y="579.6" text-anchor="middle" font-size="8.6" fill="#f26a6a">-0.06</text>
<text x="686.64" y="579.6" text-anchor="middle" font-size="8.6" fill="#f26a6a">-0.07</text>
<text x="726.71" y="579.6" text-anchor="middle" font-size="8.6" fill="#f26a6a">-0.07</text>
<text x="766.78" y="579.6" text-anchor="middle" font-size="8.6" fill="#f26a6a">-0.06</text>
<text x="806.85" y="579.6" text-anchor="middle" font-size="8.6" fill="#f26a6a">-0.05</text>
<text x="846.92" y="579.6" text-anchor="middle" font-size="8.6" fill="#f26a6a">-0.04</text>
<text x="886.99" y="579.6" text-anchor="middle" font-size="8.6" fill="#f26a6a">-0.04</text>
<text x="927.06" y="579.6" text-anchor="middle" font-size="8.6" fill="#f26a6a">-0.03</text>
<text x="967.13" y="579.6" text-anchor="middle" font-size="8.6" fill="#f26a6a">-0.02</text>
<text x="1007.2" y="579.6" text-anchor="middle" font-size="8.6" fill="#f26a6a">-0.01</text>
<text x="1047.27" y="579.6" text-anchor="middle" font-size="8.6" fill="#f26a6a">-0.01</text>
<text x="1087.34" y="579.6" text-anchor="middle" font-size="8.6" fill="#f26a6a">-0.01</text>
<path d="M606 607.2H1080" stroke="#707070" stroke-width="1"/>
<rect x="606.0" y="607.2" width="20.5" height="6.8" fill="#f07272" stroke="#5a5a6a" stroke-width=".8"/>
<rect x="666.6" y="602.4" width="40.1" height="4.8" fill="#5a72f0" stroke="#5a5a6a" stroke-width=".8"/>
<rect x="706.7" y="599.2" width="40.1" height="8.0" fill="#5a72f0" stroke="#5a5a6a" stroke-width=".8"/>
<rect x="746.8" y="597.7" width="40.1" height="9.5" fill="#5a72f0" stroke="#5a5a6a" stroke-width=".8"/>
<rect x="786.8" y="597.4" width="40.1" height="9.8" fill="#5a72f0" stroke="#5a5a6a" stroke-width=".8"/>
<rect x="826.9" y="598.1" width="40.1" height="9.1" fill="#5a72f0" stroke="#5a5a6a" stroke-width=".8"/>
<rect x="867.0" y="599.4" width="40.1" height="7.8" fill="#5a72f0" stroke="#5a5a6a" stroke-width=".8"/>
<rect x="907.0" y="600.9" width="40.1" height="6.3" fill="#5a72f0" stroke="#5a5a6a" stroke-width=".8"/>
<rect x="947.1" y="602.4" width="40.1" height="4.8" fill="#5a72f0" stroke="#5a5a6a" stroke-width=".8"/>
<rect x="987.2" y="603.8" width="40.1" height="3.4" fill="#5a72f0" stroke="#5a5a6a" stroke-width=".8"/>
<rect x="1027.2" y="604.9" width="40.1" height="2.3" fill="#5a72f0" stroke="#5a5a6a" stroke-width=".8"/>
<rect x="1067.3" y="605.7" width="40.1" height="1.5" fill="#5a72f0" stroke="#5a5a6a" stroke-width=".8"/>
<text x="606.5" y="607.1" text-anchor="middle" font-size="8.6" fill="#f26a6a">-26.56</text>
<text x="646.57" y="607.1" text-anchor="middle" font-size="8.6" fill="#f26a6a">-0.71</text>
<text x="686.64" y="616.3000000000001" text-anchor="middle" font-size="8.6" fill="#6e78f2">18.65</text>
<text x="726.71" y="616.3000000000001" text-anchor="middle" font-size="8.6" fill="#6e78f2">31.13</text>
<text x="766.78" y="616.3000000000001" text-anchor="middle" font-size="8.6" fill="#6e78f2">37.28</text>
<text x="806.85" y="616.3000000000001" text-anchor="middle" font-size="8.6" fill="#6e78f2">38.26</text>
<text x="846.92" y="616.3000000000001" text-anchor="middle" font-size="8.6" fill="#6e78f2">35.53</text>
<text x="886.99" y="616.3000000000001" text-anchor="middle" font-size="8.6" fill="#6e78f2">30.56</text>
<text x="927.06" y="616.3000000000001" text-anchor="middle" font-size="8.6" fill="#6e78f2">24.63</text>
<text x="967.13" y="616.3000000000001" text-anchor="middle" font-size="8.6" fill="#6e78f2">18.70</text>
<text x="1007.2" y="616.3000000000001" text-anchor="middle" font-size="8.6" fill="#6e78f2">13.40</text>
<text x="1047.27" y="616.3000000000001" text-anchor="middle" font-size="8.6" fill="#6e78f2">9.03</text>
<text x="1087.34" y="616.3000000000001" text-anchor="middle" font-size="8.6" fill="#6e78f2">5.90</text>
<path d="M606 635.5H1080" stroke="#707070" stroke-width="1"/>
<rect x="606.0" y="635.5" width="20.5" height="4.7" fill="#f07272" stroke="#5a5a6a" stroke-width=".8"/>
<rect x="626.5" y="635.5" width="40.1" height="6.8" fill="#f07272" stroke="#5a5a6a" stroke-width=".8"/>
<rect x="666.6" y="635.5" width="40.1" height="8.1" fill="#f07272" stroke="#5a5a6a" stroke-width=".8"/>
<rect x="706.7" y="635.5" width="40.1" height="8.6" fill="#f07272" stroke="#5a5a6a" stroke-width=".8"/>
<rect x="746.8" y="635.5" width="40.1" height="8.4" fill="#f07272" stroke="#5a5a6a" stroke-width=".8"/>
<rect x="786.8" y="635.5" width="40.1" height="7.7" fill="#f07272" stroke="#5a5a6a" stroke-width=".8"/>
<rect x="826.9" y="635.5" width="40.1" height="6.7" fill="#f07272" stroke="#5a5a6a" stroke-width=".8"/>
<rect x="867.0" y="635.5" width="40.1" height="5.5" fill="#f07272" stroke="#5a5a6a" stroke-width=".8"/>
<rect x="907.0" y="635.5" width="40.1" height="4.4" fill="#f07272" stroke="#5a5a6a" stroke-width=".8"/>
<rect x="947.1" y="635.5" width="40.1" height="3.3" fill="#f07272" stroke="#5a5a6a" stroke-width=".8"/>
<rect x="987.2" y="635.5" width="40.1" height="2.4" fill="#f07272" stroke="#5a5a6a" stroke-width=".8"/>
<rect x="1027.2" y="635.5" width="40.1" height="1.6" fill="#f07272" stroke="#5a5a6a" stroke-width=".8"/>
<rect x="1067.3" y="635.5" width="40.1" height="1.1" fill="#f07272" stroke="#5a5a6a" stroke-width=".8"/>
<text x="606.5" y="634.6" text-anchor="middle" font-size="8.6" fill="#f26a6a">-97.38</text>
<text x="646.57" y="634.6" text-anchor="middle" font-size="8.6" fill="#f26a6a">-141.28</text>
<text x="686.64" y="634.6" text-anchor="middle" font-size="8.6" fill="#f26a6a">-168.25</text>
<text x="726.71" y="634.6" text-anchor="middle" font-size="8.6" fill="#f26a6a">-178.72</text>
<text x="766.78" y="634.6" text-anchor="middle" font-size="8.6" fill="#f26a6a">-175.00</text>
<text x="806.85" y="634.6" text-anchor="middle" font-size="8.6" fill="#f26a6a">-160.63</text>
<text x="846.92" y="634.6" text-anchor="middle" font-size="8.6" fill="#f26a6a">-139.50</text>
<text x="886.99" y="634.6" text-anchor="middle" font-size="8.6" fill="#f26a6a">-115.23</text>
<text x="927.06" y="634.6" text-anchor="middle" font-size="8.6" fill="#f26a6a">-90.98</text>
<text x="967.13" y="634.6" text-anchor="middle" font-size="8.6" fill="#f26a6a">-68.70</text>
<text x="1007.2" y="634.6" text-anchor="middle" font-size="8.6" fill="#f26a6a">-49.67</text>
<text x="1047.27" y="634.6" text-anchor="middle" font-size="8.6" fill="#f26a6a">-34.36</text>
<text x="1087.34" y="634.6" text-anchor="middle" font-size="8.6" fill="#f26a6a">-22.10</text>
</g>
<rect x="856.5" y="478.3" width="42.2" height="171.5" rx="4" fill="#e8eef7" fill-opacity=".88" stroke="#8a94a4"/>
<text x="877.6" y="487.5" text-anchor="middle" font-size="8.8" fill="#303030">5888.55</text>
<text x="877.6" y="515.5" text-anchor="middle" font-size="9.5" fill="#2a3ae0" stroke="#2a3ae0" stroke-width=".12">449</text>
<text x="877.6" y="529.0" text-anchor="middle" font-size="9.5" fill="#2a3ae0" stroke="#2a3ae0" stroke-width=".12">4.8%</text>
<text x="877.6" y="556.4000000000001" text-anchor="middle" font-size="9.5" fill="#2a3ae0" stroke="#2a3ae0" stroke-width=".12">5.81</text>
<text x="877.6" y="584.0" text-anchor="middle" font-size="9.5" fill="#e82a2a" stroke="#e82a2a" stroke-width=".12">-0.04</text>
<text x="877.6" y="611.6" text-anchor="middle" font-size="9.5" fill="#2a3ae0" stroke="#2a3ae0" stroke-width=".12">31.82</text>
<text x="877.6" y="639.5" text-anchor="middle" font-size="9.5" fill="#e82a2a" stroke="#e82a2a" stroke-width=".12">-120.93</text>
</svg>
</body></html>
